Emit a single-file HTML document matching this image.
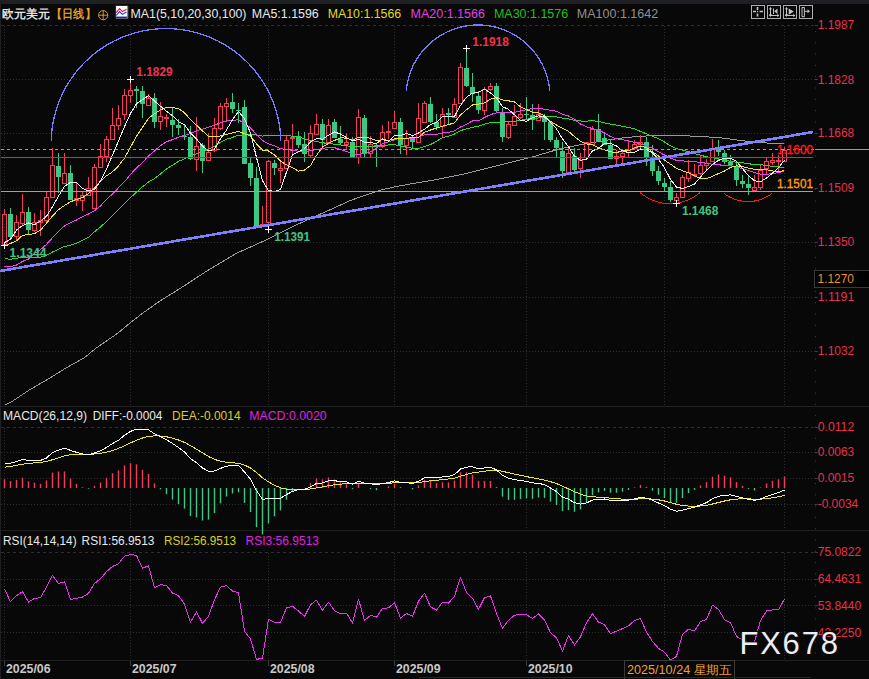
<!DOCTYPE html><html><head><meta charset="utf-8"><style>html,body{margin:0;padding:0;background:#080808;width:869px;height:679px;overflow:hidden}svg{display:block}text{font-family:"Liberation Sans",sans-serif}</style></head><body>
<svg width="869" height="679" viewBox="0 0 869 679">
<rect x="0" y="0" width="869" height="679" fill="#080808"/>
<rect x="0" y="0" width="869" height="4" fill="#1f2023"/>
<rect x="0" y="0" width="1" height="679" fill="#1f2023"/>
<line x1="1" y1="25.5" x2="815" y2="25.5" stroke="#2e2e2e" stroke-width="1" stroke-dasharray="3 3"/>
<line x1="1" y1="79.5" x2="815" y2="79.5" stroke="#2e2e2e" stroke-width="1" stroke-dasharray="1 2"/>
<line x1="1" y1="133.5" x2="815" y2="133.5" stroke="#2e2e2e" stroke-width="1" stroke-dasharray="1 2"/>
<line x1="1" y1="188.5" x2="815" y2="188.5" stroke="#2e2e2e" stroke-width="1" stroke-dasharray="1 2"/>
<line x1="1" y1="242.5" x2="815" y2="242.5" stroke="#2e2e2e" stroke-width="1" stroke-dasharray="1 2"/>
<line x1="1" y1="297.5" x2="815" y2="297.5" stroke="#2e2e2e" stroke-width="1" stroke-dasharray="1 2"/>
<line x1="1" y1="351.5" x2="815" y2="351.5" stroke="#2e2e2e" stroke-width="1" stroke-dasharray="1 2"/>
<line x1="4.5" y1="26" x2="4.5" y2="406" stroke="#2e2e2e" stroke-width="1" stroke-dasharray="1 2"/>
<line x1="4.5" y1="428" x2="4.5" y2="530" stroke="#2e2e2e" stroke-width="1" stroke-dasharray="1 2"/>
<line x1="4.5" y1="553" x2="4.5" y2="660" stroke="#2e2e2e" stroke-width="1" stroke-dasharray="1 2"/>
<line x1="130.5" y1="26" x2="130.5" y2="406" stroke="#2e2e2e" stroke-width="1" stroke-dasharray="1 2"/>
<line x1="130.5" y1="428" x2="130.5" y2="530" stroke="#2e2e2e" stroke-width="1" stroke-dasharray="1 2"/>
<line x1="130.5" y1="553" x2="130.5" y2="660" stroke="#2e2e2e" stroke-width="1" stroke-dasharray="1 2"/>
<line x1="268.5" y1="26" x2="268.5" y2="406" stroke="#2e2e2e" stroke-width="1" stroke-dasharray="1 2"/>
<line x1="268.5" y1="428" x2="268.5" y2="530" stroke="#2e2e2e" stroke-width="1" stroke-dasharray="1 2"/>
<line x1="268.5" y1="553" x2="268.5" y2="660" stroke="#2e2e2e" stroke-width="1" stroke-dasharray="1 2"/>
<line x1="394.5" y1="26" x2="394.5" y2="406" stroke="#2e2e2e" stroke-width="1" stroke-dasharray="1 2"/>
<line x1="394.5" y1="428" x2="394.5" y2="530" stroke="#2e2e2e" stroke-width="1" stroke-dasharray="1 2"/>
<line x1="394.5" y1="553" x2="394.5" y2="660" stroke="#2e2e2e" stroke-width="1" stroke-dasharray="1 2"/>
<line x1="526.5" y1="26" x2="526.5" y2="406" stroke="#2e2e2e" stroke-width="1" stroke-dasharray="1 2"/>
<line x1="526.5" y1="428" x2="526.5" y2="530" stroke="#2e2e2e" stroke-width="1" stroke-dasharray="1 2"/>
<line x1="526.5" y1="553" x2="526.5" y2="660" stroke="#2e2e2e" stroke-width="1" stroke-dasharray="1 2"/>
<line x1="664.5" y1="26" x2="664.5" y2="406" stroke="#2e2e2e" stroke-width="1" stroke-dasharray="1 2"/>
<line x1="664.5" y1="428" x2="664.5" y2="530" stroke="#2e2e2e" stroke-width="1" stroke-dasharray="1 2"/>
<line x1="664.5" y1="553" x2="664.5" y2="660" stroke="#2e2e2e" stroke-width="1" stroke-dasharray="1 2"/>
<line x1="784.5" y1="26" x2="784.5" y2="406" stroke="#2e2e2e" stroke-width="1" stroke-dasharray="1 2"/>
<line x1="784.5" y1="428" x2="784.5" y2="530" stroke="#2e2e2e" stroke-width="1" stroke-dasharray="1 2"/>
<line x1="784.5" y1="553" x2="784.5" y2="660" stroke="#2e2e2e" stroke-width="1" stroke-dasharray="1 2"/>
<line x1="815.5" y1="31" x2="815.5" y2="660" stroke="#3a3a3a" stroke-width="1" stroke-dasharray="1 10.3"/>
<rect x="815" y="25" width="3" height="1" fill="#3a3a3a"/>
<rect x="815" y="79" width="3" height="1" fill="#3a3a3a"/>
<rect x="815" y="133" width="3" height="1" fill="#3a3a3a"/>
<rect x="815" y="188" width="3" height="1" fill="#3a3a3a"/>
<rect x="815" y="242" width="3" height="1" fill="#3a3a3a"/>
<rect x="815" y="297" width="3" height="1" fill="#3a3a3a"/>
<rect x="815" y="351" width="3" height="1" fill="#3a3a3a"/>
<rect x="815" y="427" width="3" height="1" fill="#3a3a3a"/>
<rect x="815" y="452" width="3" height="1" fill="#3a3a3a"/>
<rect x="815" y="478" width="3" height="1" fill="#3a3a3a"/>
<rect x="815" y="504" width="3" height="1" fill="#3a3a3a"/>
<rect x="815" y="552" width="3" height="1" fill="#3a3a3a"/>
<rect x="815" y="579" width="3" height="1" fill="#3a3a3a"/>
<rect x="815" y="605" width="3" height="1" fill="#3a3a3a"/>
<rect x="815" y="632" width="3" height="1" fill="#3a3a3a"/>
<rect x="0" y="406" width="869" height="1" fill="#202020"/>
<rect x="0" y="530" width="869" height="1" fill="#202020"/>
<rect x="0" y="660" width="869" height="1" fill="#202020"/>
<line x1="1" y1="427.5" x2="815" y2="427.5" stroke="#2e2e2e" stroke-width="1" stroke-dasharray="3 3"/>
<line x1="1" y1="452.5" x2="815" y2="452.5" stroke="#2e2e2e" stroke-width="1" stroke-dasharray="1 2"/>
<line x1="1" y1="478.5" x2="815" y2="478.5" stroke="#2e2e2e" stroke-width="1" stroke-dasharray="1 2"/>
<line x1="1" y1="504.5" x2="815" y2="504.5" stroke="#2e2e2e" stroke-width="1" stroke-dasharray="1 2"/>
<line x1="1" y1="552.5" x2="815" y2="552.5" stroke="#2e2e2e" stroke-width="1" stroke-dasharray="3 3"/>
<line x1="1" y1="579.5" x2="815" y2="579.5" stroke="#2e2e2e" stroke-width="1" stroke-dasharray="1 2"/>
<line x1="1" y1="605.5" x2="815" y2="605.5" stroke="#2e2e2e" stroke-width="1" stroke-dasharray="1 2"/>
<line x1="1" y1="632.5" x2="815" y2="632.5" stroke="#2e2e2e" stroke-width="1" stroke-dasharray="1 2"/>
<polyline points="4.6,405.3 11.0,402.2 29.5,389.9 47.9,379.2 66.3,367.8 84.7,357.5 95.8,348.3 117.9,333.1 128.9,323.9 141.8,313.8 160.0,300.9 178.8,289.3 207.5,270.6 236.3,253.4 265.1,240.4 293.8,226.0 322.6,213.1 351.4,200.1 380.2,190.1 400.0,185.8 438.3,179.2 462.5,174.4 486.7,168.3 510.8,162.3 535.0,156.2 559.2,149.0 583.3,144.2 604.5,140.5 626.2,137.4 650.4,135.7 674.6,135.7 698.7,136.2 722.9,138.1 747.1,141.3 771.2,143.4 784.5,143.7" fill="none" stroke="#9a9a9a" stroke-width="1" stroke-linejoin="round" shape-rendering="crispEdges"/>
<line x1="4.5" y1="209" x2="4.5" y2="214" stroke="#f23c5a" stroke-width="1"/>
<line x1="4.5" y1="244" x2="4.5" y2="245" stroke="#f23c5a" stroke-width="1"/>
<rect x="2.5" y="214.5" width="4" height="30" fill="none" stroke="#f23c5a" stroke-width="1"/>
<line x1="10.5" y1="208" x2="10.5" y2="238" stroke="#3cc884" stroke-width="1"/>
<rect x="8.0" y="214" width="5" height="23" fill="#3cc884"/>
<line x1="16.5" y1="215" x2="16.5" y2="222" stroke="#f23c5a" stroke-width="1"/>
<line x1="16.5" y1="236" x2="16.5" y2="241" stroke="#f23c5a" stroke-width="1"/>
<rect x="14.5" y="222.5" width="4" height="14" fill="none" stroke="#f23c5a" stroke-width="1"/>
<line x1="22.5" y1="194" x2="22.5" y2="212" stroke="#f23c5a" stroke-width="1"/>
<line x1="22.5" y1="223" x2="22.5" y2="226" stroke="#f23c5a" stroke-width="1"/>
<rect x="20.5" y="212.5" width="4" height="11" fill="none" stroke="#f23c5a" stroke-width="1"/>
<line x1="28.5" y1="207" x2="28.5" y2="234" stroke="#3cc884" stroke-width="1"/>
<rect x="26.0" y="212" width="5" height="18" fill="#3cc884"/>
<line x1="34.5" y1="213" x2="34.5" y2="222" stroke="#f23c5a" stroke-width="1"/>
<line x1="34.5" y1="230" x2="34.5" y2="232" stroke="#f23c5a" stroke-width="1"/>
<rect x="32.5" y="222.5" width="4" height="8" fill="none" stroke="#f23c5a" stroke-width="1"/>
<line x1="40.5" y1="210" x2="40.5" y2="220" stroke="#f23c5a" stroke-width="1"/>
<line x1="40.5" y1="222" x2="40.5" y2="236" stroke="#f23c5a" stroke-width="1"/>
<rect x="38.5" y="220.5" width="4" height="2" fill="none" stroke="#f23c5a" stroke-width="1"/>
<line x1="46.5" y1="192" x2="46.5" y2="197" stroke="#f23c5a" stroke-width="1"/>
<line x1="46.5" y1="220" x2="46.5" y2="223" stroke="#f23c5a" stroke-width="1"/>
<rect x="44.5" y="197.5" width="4" height="23" fill="none" stroke="#f23c5a" stroke-width="1"/>
<line x1="52.5" y1="148" x2="52.5" y2="165" stroke="#f23c5a" stroke-width="1"/>
<line x1="52.5" y1="197" x2="52.5" y2="198" stroke="#f23c5a" stroke-width="1"/>
<rect x="50.5" y="165.5" width="4" height="32" fill="none" stroke="#f23c5a" stroke-width="1"/>
<line x1="58.5" y1="153" x2="58.5" y2="193" stroke="#3cc884" stroke-width="1"/>
<rect x="56.0" y="166" width="5" height="11" fill="#3cc884"/>
<line x1="64.5" y1="153" x2="64.5" y2="173" stroke="#f23c5a" stroke-width="1"/>
<line x1="64.5" y1="183" x2="64.5" y2="183" stroke="#f23c5a" stroke-width="1"/>
<rect x="62.5" y="173.5" width="4" height="10" fill="none" stroke="#f23c5a" stroke-width="1"/>
<line x1="70.5" y1="165" x2="70.5" y2="200" stroke="#3cc884" stroke-width="1"/>
<rect x="68.0" y="173" width="5" height="27" fill="#3cc884"/>
<line x1="76.5" y1="182" x2="76.5" y2="198" stroke="#f23c5a" stroke-width="1"/>
<line x1="76.5" y1="200" x2="76.5" y2="206" stroke="#f23c5a" stroke-width="1"/>
<rect x="74.5" y="198.5" width="4" height="2" fill="none" stroke="#f23c5a" stroke-width="1"/>
<line x1="82.5" y1="192" x2="82.5" y2="195" stroke="#f23c5a" stroke-width="1"/>
<line x1="82.5" y1="200" x2="82.5" y2="211" stroke="#f23c5a" stroke-width="1"/>
<rect x="80.5" y="195.5" width="4" height="5" fill="none" stroke="#f23c5a" stroke-width="1"/>
<line x1="88.5" y1="177" x2="88.5" y2="188" stroke="#f23c5a" stroke-width="1"/>
<line x1="88.5" y1="195" x2="88.5" y2="196" stroke="#f23c5a" stroke-width="1"/>
<rect x="86.5" y="188.5" width="4" height="7" fill="none" stroke="#f23c5a" stroke-width="1"/>
<line x1="94.5" y1="164" x2="94.5" y2="167" stroke="#f23c5a" stroke-width="1"/>
<line x1="94.5" y1="208" x2="94.5" y2="209" stroke="#f23c5a" stroke-width="1"/>
<rect x="92.5" y="167.5" width="4" height="41" fill="none" stroke="#f23c5a" stroke-width="1"/>
<line x1="100.5" y1="144" x2="100.5" y2="156" stroke="#f23c5a" stroke-width="1"/>
<line x1="100.5" y1="167" x2="100.5" y2="167" stroke="#f23c5a" stroke-width="1"/>
<rect x="98.5" y="156.5" width="4" height="11" fill="none" stroke="#f23c5a" stroke-width="1"/>
<line x1="106.5" y1="136" x2="106.5" y2="139" stroke="#f23c5a" stroke-width="1"/>
<line x1="106.5" y1="156" x2="106.5" y2="162" stroke="#f23c5a" stroke-width="1"/>
<rect x="104.5" y="139.5" width="4" height="17" fill="none" stroke="#f23c5a" stroke-width="1"/>
<line x1="112.5" y1="108" x2="112.5" y2="125" stroke="#f23c5a" stroke-width="1"/>
<line x1="112.5" y1="139" x2="112.5" y2="140" stroke="#f23c5a" stroke-width="1"/>
<rect x="110.5" y="125.5" width="4" height="14" fill="none" stroke="#f23c5a" stroke-width="1"/>
<line x1="118.5" y1="105" x2="118.5" y2="118" stroke="#f23c5a" stroke-width="1"/>
<line x1="118.5" y1="125" x2="118.5" y2="130" stroke="#f23c5a" stroke-width="1"/>
<rect x="116.5" y="118.5" width="4" height="7" fill="none" stroke="#f23c5a" stroke-width="1"/>
<line x1="124.5" y1="89" x2="124.5" y2="95" stroke="#f23c5a" stroke-width="1"/>
<line x1="124.5" y1="114" x2="124.5" y2="120" stroke="#f23c5a" stroke-width="1"/>
<rect x="122.5" y="95.5" width="4" height="19" fill="none" stroke="#f23c5a" stroke-width="1"/>
<line x1="130.5" y1="79" x2="130.5" y2="90" stroke="#f23c5a" stroke-width="1"/>
<line x1="130.5" y1="95" x2="130.5" y2="103" stroke="#f23c5a" stroke-width="1"/>
<rect x="128.5" y="90.5" width="4" height="5" fill="none" stroke="#f23c5a" stroke-width="1"/>
<line x1="136.5" y1="86" x2="136.5" y2="108" stroke="#3cc884" stroke-width="1"/>
<rect x="134.0" y="89" width="5" height="2" fill="#3cc884"/>
<line x1="142.5" y1="86" x2="142.5" y2="118" stroke="#3cc884" stroke-width="1"/>
<rect x="140.0" y="91" width="5" height="13" fill="#3cc884"/>
<line x1="148.5" y1="94" x2="148.5" y2="98" stroke="#f23c5a" stroke-width="1"/>
<line x1="148.5" y1="105" x2="148.5" y2="106" stroke="#f23c5a" stroke-width="1"/>
<rect x="146.5" y="98.5" width="4" height="7" fill="none" stroke="#f23c5a" stroke-width="1"/>
<line x1="154.5" y1="93" x2="154.5" y2="128" stroke="#3cc884" stroke-width="1"/>
<rect x="152.0" y="98" width="5" height="24" fill="#3cc884"/>
<line x1="160.5" y1="102" x2="160.5" y2="116" stroke="#f23c5a" stroke-width="1"/>
<line x1="160.5" y1="121" x2="160.5" y2="130" stroke="#f23c5a" stroke-width="1"/>
<rect x="158.5" y="116.5" width="4" height="5" fill="none" stroke="#f23c5a" stroke-width="1"/>
<line x1="166.5" y1="114" x2="166.5" y2="117" stroke="#f23c5a" stroke-width="1"/>
<line x1="166.5" y1="118" x2="166.5" y2="127" stroke="#f23c5a" stroke-width="1"/>
<rect x="164.5" y="117.5" width="4" height="1" fill="none" stroke="#f23c5a" stroke-width="1"/>
<line x1="172.5" y1="108" x2="172.5" y2="137" stroke="#3cc884" stroke-width="1"/>
<rect x="170.0" y="120" width="5" height="5" fill="#3cc884"/>
<line x1="178.5" y1="119" x2="178.5" y2="135" stroke="#3cc884" stroke-width="1"/>
<rect x="176.0" y="125" width="5" height="3" fill="#3cc884"/>
<line x1="184.5" y1="125" x2="184.5" y2="140" stroke="#3cc884" stroke-width="1"/>
<rect x="182.0" y="136" width="5" height="1" fill="#3cc884"/>
<line x1="190.5" y1="126" x2="190.5" y2="160" stroke="#3cc884" stroke-width="1"/>
<rect x="188.0" y="137" width="5" height="22" fill="#3cc884"/>
<line x1="196.5" y1="117" x2="196.5" y2="146" stroke="#f23c5a" stroke-width="1"/>
<line x1="196.5" y1="159" x2="196.5" y2="171" stroke="#f23c5a" stroke-width="1"/>
<rect x="194.5" y="146.5" width="4" height="13" fill="none" stroke="#f23c5a" stroke-width="1"/>
<line x1="202.5" y1="143" x2="202.5" y2="173" stroke="#3cc884" stroke-width="1"/>
<rect x="200.0" y="145" width="5" height="16" fill="#3cc884"/>
<line x1="208.5" y1="133" x2="208.5" y2="152" stroke="#f23c5a" stroke-width="1"/>
<line x1="208.5" y1="160" x2="208.5" y2="161" stroke="#f23c5a" stroke-width="1"/>
<rect x="206.5" y="152.5" width="4" height="8" fill="none" stroke="#f23c5a" stroke-width="1"/>
<line x1="214.5" y1="118" x2="214.5" y2="128" stroke="#f23c5a" stroke-width="1"/>
<line x1="214.5" y1="150" x2="214.5" y2="152" stroke="#f23c5a" stroke-width="1"/>
<rect x="212.5" y="128.5" width="4" height="22" fill="none" stroke="#f23c5a" stroke-width="1"/>
<line x1="220.5" y1="103" x2="220.5" y2="106" stroke="#f23c5a" stroke-width="1"/>
<line x1="220.5" y1="128" x2="220.5" y2="130" stroke="#f23c5a" stroke-width="1"/>
<rect x="218.5" y="106.5" width="4" height="22" fill="none" stroke="#f23c5a" stroke-width="1"/>
<line x1="226.5" y1="98" x2="226.5" y2="103" stroke="#f23c5a" stroke-width="1"/>
<line x1="226.5" y1="106" x2="226.5" y2="120" stroke="#f23c5a" stroke-width="1"/>
<rect x="224.5" y="103.5" width="4" height="3" fill="none" stroke="#f23c5a" stroke-width="1"/>
<line x1="232.5" y1="93" x2="232.5" y2="113" stroke="#3cc884" stroke-width="1"/>
<rect x="230.0" y="102" width="5" height="7" fill="#3cc884"/>
<line x1="238.5" y1="103" x2="238.5" y2="123" stroke="#3cc884" stroke-width="1"/>
<rect x="236.0" y="110" width="5" height="1" fill="#3cc884"/>
<line x1="244.5" y1="100" x2="244.5" y2="164" stroke="#3cc884" stroke-width="1"/>
<rect x="242.0" y="107" width="5" height="57" fill="#3cc884"/>
<line x1="250.5" y1="158" x2="250.5" y2="186" stroke="#3cc884" stroke-width="1"/>
<rect x="248.0" y="163" width="5" height="15" fill="#3cc884"/>
<line x1="256.5" y1="167" x2="256.5" y2="226" stroke="#3cc884" stroke-width="1"/>
<rect x="254.0" y="178" width="5" height="48" fill="#3cc884"/>
<line x1="262.5" y1="206" x2="262.5" y2="224" stroke="#f23c5a" stroke-width="1"/>
<line x1="262.5" y1="225" x2="262.5" y2="226" stroke="#f23c5a" stroke-width="1"/>
<rect x="260.5" y="224.5" width="4" height="1" fill="none" stroke="#f23c5a" stroke-width="1"/>
<line x1="268.5" y1="160" x2="268.5" y2="161" stroke="#f23c5a" stroke-width="1"/>
<line x1="268.5" y1="222" x2="268.5" y2="229" stroke="#f23c5a" stroke-width="1"/>
<rect x="266.5" y="161.5" width="4" height="61" fill="none" stroke="#f23c5a" stroke-width="1"/>
<line x1="274.5" y1="160" x2="274.5" y2="175" stroke="#3cc884" stroke-width="1"/>
<rect x="272.0" y="163" width="5" height="5" fill="#3cc884"/>
<line x1="280.5" y1="162" x2="280.5" y2="168" stroke="#f23c5a" stroke-width="1"/>
<line x1="280.5" y1="170" x2="280.5" y2="183" stroke="#f23c5a" stroke-width="1"/>
<rect x="278.5" y="168.5" width="4" height="2" fill="none" stroke="#f23c5a" stroke-width="1"/>
<line x1="286.5" y1="136" x2="286.5" y2="140" stroke="#f23c5a" stroke-width="1"/>
<line x1="286.5" y1="168" x2="286.5" y2="168" stroke="#f23c5a" stroke-width="1"/>
<rect x="284.5" y="140.5" width="4" height="28" fill="none" stroke="#f23c5a" stroke-width="1"/>
<line x1="292.5" y1="124" x2="292.5" y2="137" stroke="#f23c5a" stroke-width="1"/>
<line x1="292.5" y1="138" x2="292.5" y2="154" stroke="#f23c5a" stroke-width="1"/>
<rect x="290.5" y="137.5" width="4" height="1" fill="none" stroke="#f23c5a" stroke-width="1"/>
<line x1="298.5" y1="131" x2="298.5" y2="148" stroke="#3cc884" stroke-width="1"/>
<rect x="296.0" y="136" width="5" height="9" fill="#3cc884"/>
<line x1="304.5" y1="132" x2="304.5" y2="162" stroke="#3cc884" stroke-width="1"/>
<rect x="302.0" y="144" width="5" height="10" fill="#3cc884"/>
<line x1="310.5" y1="125" x2="310.5" y2="133" stroke="#f23c5a" stroke-width="1"/>
<line x1="310.5" y1="155" x2="310.5" y2="157" stroke="#f23c5a" stroke-width="1"/>
<rect x="308.5" y="133.5" width="4" height="22" fill="none" stroke="#f23c5a" stroke-width="1"/>
<line x1="316.5" y1="114" x2="316.5" y2="124" stroke="#f23c5a" stroke-width="1"/>
<line x1="316.5" y1="134" x2="316.5" y2="134" stroke="#f23c5a" stroke-width="1"/>
<rect x="314.5" y="124.5" width="4" height="10" fill="none" stroke="#f23c5a" stroke-width="1"/>
<line x1="322.5" y1="119" x2="322.5" y2="146" stroke="#3cc884" stroke-width="1"/>
<rect x="320.0" y="124" width="5" height="16" fill="#3cc884"/>
<line x1="328.5" y1="119" x2="328.5" y2="125" stroke="#f23c5a" stroke-width="1"/>
<line x1="328.5" y1="142" x2="328.5" y2="143" stroke="#f23c5a" stroke-width="1"/>
<rect x="326.5" y="125.5" width="4" height="17" fill="none" stroke="#f23c5a" stroke-width="1"/>
<line x1="334.5" y1="119" x2="334.5" y2="138" stroke="#3cc884" stroke-width="1"/>
<rect x="332.0" y="122" width="5" height="16" fill="#3cc884"/>
<line x1="340.5" y1="126" x2="340.5" y2="144" stroke="#3cc884" stroke-width="1"/>
<rect x="338.0" y="139" width="5" height="4" fill="#3cc884"/>
<line x1="346.5" y1="133" x2="346.5" y2="142" stroke="#f23c5a" stroke-width="1"/>
<line x1="346.5" y1="144" x2="346.5" y2="150" stroke="#f23c5a" stroke-width="1"/>
<rect x="344.5" y="142.5" width="4" height="2" fill="none" stroke="#f23c5a" stroke-width="1"/>
<line x1="352.5" y1="137" x2="352.5" y2="157" stroke="#3cc884" stroke-width="1"/>
<rect x="350.0" y="142" width="5" height="15" fill="#3cc884"/>
<line x1="358.5" y1="109" x2="358.5" y2="117" stroke="#f23c5a" stroke-width="1"/>
<line x1="358.5" y1="157" x2="358.5" y2="164" stroke="#f23c5a" stroke-width="1"/>
<rect x="356.5" y="117.5" width="4" height="40" fill="none" stroke="#f23c5a" stroke-width="1"/>
<line x1="364.5" y1="115" x2="364.5" y2="157" stroke="#3cc884" stroke-width="1"/>
<rect x="362.0" y="118" width="5" height="35" fill="#3cc884"/>
<line x1="370.5" y1="136" x2="370.5" y2="144" stroke="#f23c5a" stroke-width="1"/>
<line x1="370.5" y1="153" x2="370.5" y2="157" stroke="#f23c5a" stroke-width="1"/>
<rect x="368.5" y="144.5" width="4" height="9" fill="none" stroke="#f23c5a" stroke-width="1"/>
<line x1="376.5" y1="143" x2="376.5" y2="167" stroke="#3cc884" stroke-width="1"/>
<rect x="374.0" y="145" width="5" height="2" fill="#3cc884"/>
<line x1="382.5" y1="125" x2="382.5" y2="132" stroke="#f23c5a" stroke-width="1"/>
<line x1="382.5" y1="146" x2="382.5" y2="148" stroke="#f23c5a" stroke-width="1"/>
<rect x="380.5" y="132.5" width="4" height="14" fill="none" stroke="#f23c5a" stroke-width="1"/>
<line x1="388.5" y1="121" x2="388.5" y2="131" stroke="#f23c5a" stroke-width="1"/>
<line x1="388.5" y1="132" x2="388.5" y2="139" stroke="#f23c5a" stroke-width="1"/>
<rect x="386.5" y="131.5" width="4" height="1" fill="none" stroke="#f23c5a" stroke-width="1"/>
<line x1="394.5" y1="111" x2="394.5" y2="122" stroke="#f23c5a" stroke-width="1"/>
<line x1="394.5" y1="128" x2="394.5" y2="129" stroke="#f23c5a" stroke-width="1"/>
<rect x="392.5" y="122.5" width="4" height="6" fill="none" stroke="#f23c5a" stroke-width="1"/>
<line x1="400.5" y1="118" x2="400.5" y2="154" stroke="#3cc884" stroke-width="1"/>
<rect x="398.0" y="122" width="5" height="23" fill="#3cc884"/>
<line x1="406.5" y1="130" x2="406.5" y2="138" stroke="#f23c5a" stroke-width="1"/>
<line x1="406.5" y1="145" x2="406.5" y2="155" stroke="#f23c5a" stroke-width="1"/>
<rect x="404.5" y="138.5" width="4" height="7" fill="none" stroke="#f23c5a" stroke-width="1"/>
<line x1="412.5" y1="135" x2="412.5" y2="148" stroke="#3cc884" stroke-width="1"/>
<rect x="410.0" y="138" width="5" height="4" fill="#3cc884"/>
<line x1="418.5" y1="103" x2="418.5" y2="118" stroke="#f23c5a" stroke-width="1"/>
<line x1="418.5" y1="142" x2="418.5" y2="143" stroke="#f23c5a" stroke-width="1"/>
<rect x="416.5" y="118.5" width="4" height="24" fill="none" stroke="#f23c5a" stroke-width="1"/>
<line x1="424.5" y1="101" x2="424.5" y2="103" stroke="#f23c5a" stroke-width="1"/>
<line x1="424.5" y1="122" x2="424.5" y2="122" stroke="#f23c5a" stroke-width="1"/>
<rect x="422.5" y="103.5" width="4" height="19" fill="none" stroke="#f23c5a" stroke-width="1"/>
<line x1="430.5" y1="97" x2="430.5" y2="123" stroke="#3cc884" stroke-width="1"/>
<rect x="428.0" y="104" width="5" height="18" fill="#3cc884"/>
<line x1="436.5" y1="114" x2="436.5" y2="130" stroke="#3cc884" stroke-width="1"/>
<rect x="434.0" y="122" width="5" height="5" fill="#3cc884"/>
<line x1="442.5" y1="108" x2="442.5" y2="114" stroke="#f23c5a" stroke-width="1"/>
<line x1="442.5" y1="126" x2="442.5" y2="137" stroke="#f23c5a" stroke-width="1"/>
<rect x="440.5" y="114.5" width="4" height="12" fill="none" stroke="#f23c5a" stroke-width="1"/>
<line x1="448.5" y1="108" x2="448.5" y2="124" stroke="#3cc884" stroke-width="1"/>
<rect x="446.0" y="113" width="5" height="2" fill="#3cc884"/>
<line x1="454.5" y1="98" x2="454.5" y2="104" stroke="#f23c5a" stroke-width="1"/>
<line x1="454.5" y1="117" x2="454.5" y2="118" stroke="#f23c5a" stroke-width="1"/>
<rect x="452.5" y="104.5" width="4" height="13" fill="none" stroke="#f23c5a" stroke-width="1"/>
<line x1="460.5" y1="63" x2="460.5" y2="67" stroke="#f23c5a" stroke-width="1"/>
<line x1="460.5" y1="103" x2="460.5" y2="104" stroke="#f23c5a" stroke-width="1"/>
<rect x="458.5" y="67.5" width="4" height="36" fill="none" stroke="#f23c5a" stroke-width="1"/>
<line x1="466.5" y1="49" x2="466.5" y2="87" stroke="#3cc884" stroke-width="1"/>
<rect x="464.0" y="68" width="5" height="18" fill="#3cc884"/>
<line x1="472.5" y1="73" x2="472.5" y2="102" stroke="#3cc884" stroke-width="1"/>
<rect x="470.0" y="87" width="5" height="7" fill="#3cc884"/>
<line x1="478.5" y1="91" x2="478.5" y2="114" stroke="#3cc884" stroke-width="1"/>
<rect x="476.0" y="96" width="5" height="14" fill="#3cc884"/>
<line x1="484.5" y1="87" x2="484.5" y2="89" stroke="#f23c5a" stroke-width="1"/>
<line x1="484.5" y1="110" x2="484.5" y2="115" stroke="#f23c5a" stroke-width="1"/>
<rect x="482.5" y="89.5" width="4" height="21" fill="none" stroke="#f23c5a" stroke-width="1"/>
<line x1="490.5" y1="83" x2="490.5" y2="86" stroke="#f23c5a" stroke-width="1"/>
<line x1="490.5" y1="89" x2="490.5" y2="91" stroke="#f23c5a" stroke-width="1"/>
<rect x="488.5" y="86.5" width="4" height="3" fill="none" stroke="#f23c5a" stroke-width="1"/>
<line x1="496.5" y1="83" x2="496.5" y2="113" stroke="#3cc884" stroke-width="1"/>
<rect x="494.0" y="86" width="5" height="25" fill="#3cc884"/>
<line x1="502.5" y1="108" x2="502.5" y2="142" stroke="#3cc884" stroke-width="1"/>
<rect x="500.0" y="112" width="5" height="25" fill="#3cc884"/>
<line x1="508.5" y1="122" x2="508.5" y2="124" stroke="#f23c5a" stroke-width="1"/>
<line x1="508.5" y1="137" x2="508.5" y2="139" stroke="#f23c5a" stroke-width="1"/>
<rect x="506.5" y="124.5" width="4" height="13" fill="none" stroke="#f23c5a" stroke-width="1"/>
<line x1="514.5" y1="105" x2="514.5" y2="116" stroke="#f23c5a" stroke-width="1"/>
<line x1="514.5" y1="125" x2="514.5" y2="125" stroke="#f23c5a" stroke-width="1"/>
<rect x="512.5" y="116.5" width="4" height="9" fill="none" stroke="#f23c5a" stroke-width="1"/>
<line x1="520.5" y1="103" x2="520.5" y2="114" stroke="#f23c5a" stroke-width="1"/>
<line x1="520.5" y1="117" x2="520.5" y2="119" stroke="#f23c5a" stroke-width="1"/>
<rect x="518.5" y="114.5" width="4" height="3" fill="none" stroke="#f23c5a" stroke-width="1"/>
<line x1="526.5" y1="97" x2="526.5" y2="119" stroke="#3cc884" stroke-width="1"/>
<rect x="524.0" y="114" width="5" height="1" fill="#3cc884"/>
<line x1="532.5" y1="104" x2="532.5" y2="130" stroke="#3cc884" stroke-width="1"/>
<rect x="530.0" y="115" width="5" height="5" fill="#3cc884"/>
<line x1="538.5" y1="104" x2="538.5" y2="114" stroke="#f23c5a" stroke-width="1"/>
<line x1="538.5" y1="120" x2="538.5" y2="120" stroke="#f23c5a" stroke-width="1"/>
<rect x="536.5" y="114.5" width="4" height="6" fill="none" stroke="#f23c5a" stroke-width="1"/>
<line x1="544.5" y1="114" x2="544.5" y2="140" stroke="#3cc884" stroke-width="1"/>
<rect x="542.0" y="118" width="5" height="4" fill="#3cc884"/>
<line x1="550.5" y1="122" x2="550.5" y2="142" stroke="#3cc884" stroke-width="1"/>
<rect x="548.0" y="122" width="5" height="18" fill="#3cc884"/>
<line x1="556.5" y1="137" x2="556.5" y2="157" stroke="#3cc884" stroke-width="1"/>
<rect x="554.0" y="140" width="5" height="8" fill="#3cc884"/>
<line x1="562.5" y1="142" x2="562.5" y2="178" stroke="#3cc884" stroke-width="1"/>
<rect x="560.0" y="151" width="5" height="20" fill="#3cc884"/>
<line x1="568.5" y1="148" x2="568.5" y2="153" stroke="#f23c5a" stroke-width="1"/>
<line x1="568.5" y1="172" x2="568.5" y2="172" stroke="#f23c5a" stroke-width="1"/>
<rect x="566.5" y="153.5" width="4" height="19" fill="none" stroke="#f23c5a" stroke-width="1"/>
<line x1="574.5" y1="148" x2="574.5" y2="171" stroke="#3cc884" stroke-width="1"/>
<rect x="572.0" y="156" width="5" height="14" fill="#3cc884"/>
<line x1="580.5" y1="153" x2="580.5" y2="160" stroke="#f23c5a" stroke-width="1"/>
<line x1="580.5" y1="168" x2="580.5" y2="178" stroke="#f23c5a" stroke-width="1"/>
<rect x="578.5" y="160.5" width="4" height="8" fill="none" stroke="#f23c5a" stroke-width="1"/>
<line x1="586.5" y1="142" x2="586.5" y2="142" stroke="#f23c5a" stroke-width="1"/>
<line x1="586.5" y1="157" x2="586.5" y2="157" stroke="#f23c5a" stroke-width="1"/>
<rect x="584.5" y="142.5" width="4" height="15" fill="none" stroke="#f23c5a" stroke-width="1"/>
<line x1="592.5" y1="126" x2="592.5" y2="129" stroke="#f23c5a" stroke-width="1"/>
<line x1="592.5" y1="144" x2="592.5" y2="144" stroke="#f23c5a" stroke-width="1"/>
<rect x="590.5" y="129.5" width="4" height="15" fill="none" stroke="#f23c5a" stroke-width="1"/>
<line x1="598.5" y1="114" x2="598.5" y2="141" stroke="#3cc884" stroke-width="1"/>
<rect x="596.0" y="129" width="5" height="12" fill="#3cc884"/>
<line x1="604.5" y1="133" x2="604.5" y2="145" stroke="#3cc884" stroke-width="1"/>
<rect x="602.0" y="138" width="5" height="7" fill="#3cc884"/>
<line x1="610.5" y1="139" x2="610.5" y2="159" stroke="#3cc884" stroke-width="1"/>
<rect x="608.0" y="145" width="5" height="14" fill="#3cc884"/>
<line x1="616.5" y1="150" x2="616.5" y2="156" stroke="#f23c5a" stroke-width="1"/>
<line x1="616.5" y1="158" x2="616.5" y2="164" stroke="#f23c5a" stroke-width="1"/>
<rect x="614.5" y="156.5" width="4" height="2" fill="none" stroke="#f23c5a" stroke-width="1"/>
<line x1="622.5" y1="149" x2="622.5" y2="153" stroke="#f23c5a" stroke-width="1"/>
<line x1="622.5" y1="156" x2="622.5" y2="164" stroke="#f23c5a" stroke-width="1"/>
<rect x="620.5" y="153.5" width="4" height="3" fill="none" stroke="#f23c5a" stroke-width="1"/>
<line x1="628.5" y1="140" x2="628.5" y2="150" stroke="#f23c5a" stroke-width="1"/>
<line x1="628.5" y1="152" x2="628.5" y2="157" stroke="#f23c5a" stroke-width="1"/>
<rect x="626.5" y="150.5" width="4" height="2" fill="none" stroke="#f23c5a" stroke-width="1"/>
<line x1="634.5" y1="140" x2="634.5" y2="144" stroke="#f23c5a" stroke-width="1"/>
<line x1="634.5" y1="148" x2="634.5" y2="150" stroke="#f23c5a" stroke-width="1"/>
<rect x="632.5" y="144.5" width="4" height="4" fill="none" stroke="#f23c5a" stroke-width="1"/>
<line x1="640.5" y1="135" x2="640.5" y2="142" stroke="#f23c5a" stroke-width="1"/>
<line x1="640.5" y1="144" x2="640.5" y2="148" stroke="#f23c5a" stroke-width="1"/>
<rect x="638.5" y="142.5" width="4" height="2" fill="none" stroke="#f23c5a" stroke-width="1"/>
<line x1="646.5" y1="137" x2="646.5" y2="166" stroke="#3cc884" stroke-width="1"/>
<rect x="644.0" y="142" width="5" height="16" fill="#3cc884"/>
<line x1="652.5" y1="145" x2="652.5" y2="176" stroke="#3cc884" stroke-width="1"/>
<rect x="650.0" y="160" width="5" height="11" fill="#3cc884"/>
<line x1="658.5" y1="166" x2="658.5" y2="185" stroke="#3cc884" stroke-width="1"/>
<rect x="656.0" y="171" width="5" height="10" fill="#3cc884"/>
<line x1="664.5" y1="178" x2="664.5" y2="191" stroke="#3cc884" stroke-width="1"/>
<rect x="662.0" y="183" width="5" height="4" fill="#3cc884"/>
<line x1="670.5" y1="181" x2="670.5" y2="202" stroke="#3cc884" stroke-width="1"/>
<rect x="668.0" y="187" width="5" height="13" fill="#3cc884"/>
<line x1="676.5" y1="193" x2="676.5" y2="197" stroke="#f23c5a" stroke-width="1"/>
<line x1="676.5" y1="200" x2="676.5" y2="204" stroke="#f23c5a" stroke-width="1"/>
<rect x="674.5" y="197.5" width="4" height="3" fill="none" stroke="#f23c5a" stroke-width="1"/>
<line x1="682.5" y1="175" x2="682.5" y2="177" stroke="#f23c5a" stroke-width="1"/>
<line x1="682.5" y1="197" x2="682.5" y2="197" stroke="#f23c5a" stroke-width="1"/>
<rect x="680.5" y="177.5" width="4" height="20" fill="none" stroke="#f23c5a" stroke-width="1"/>
<line x1="688.5" y1="160" x2="688.5" y2="172" stroke="#f23c5a" stroke-width="1"/>
<line x1="688.5" y1="178" x2="688.5" y2="182" stroke="#f23c5a" stroke-width="1"/>
<rect x="686.5" y="172.5" width="4" height="6" fill="none" stroke="#f23c5a" stroke-width="1"/>
<line x1="694.5" y1="164" x2="694.5" y2="174" stroke="#f23c5a" stroke-width="1"/>
<line x1="694.5" y1="175" x2="694.5" y2="177" stroke="#f23c5a" stroke-width="1"/>
<rect x="692.5" y="174.5" width="4" height="1" fill="none" stroke="#f23c5a" stroke-width="1"/>
<line x1="700.5" y1="156" x2="700.5" y2="165" stroke="#f23c5a" stroke-width="1"/>
<line x1="700.5" y1="173" x2="700.5" y2="175" stroke="#f23c5a" stroke-width="1"/>
<rect x="698.5" y="165.5" width="4" height="8" fill="none" stroke="#f23c5a" stroke-width="1"/>
<line x1="706.5" y1="159" x2="706.5" y2="163" stroke="#f23c5a" stroke-width="1"/>
<line x1="706.5" y1="165" x2="706.5" y2="169" stroke="#f23c5a" stroke-width="1"/>
<rect x="704.5" y="163.5" width="4" height="2" fill="none" stroke="#f23c5a" stroke-width="1"/>
<line x1="712.5" y1="139" x2="712.5" y2="148" stroke="#f23c5a" stroke-width="1"/>
<line x1="712.5" y1="161" x2="712.5" y2="162" stroke="#f23c5a" stroke-width="1"/>
<rect x="710.5" y="148.5" width="4" height="13" fill="none" stroke="#f23c5a" stroke-width="1"/>
<line x1="718.5" y1="140" x2="718.5" y2="156" stroke="#3cc884" stroke-width="1"/>
<rect x="716.0" y="149" width="5" height="3" fill="#3cc884"/>
<line x1="724.5" y1="150" x2="724.5" y2="164" stroke="#3cc884" stroke-width="1"/>
<rect x="722.0" y="153" width="5" height="9" fill="#3cc884"/>
<line x1="730.5" y1="155" x2="730.5" y2="166" stroke="#3cc884" stroke-width="1"/>
<rect x="728.0" y="162" width="5" height="3" fill="#3cc884"/>
<line x1="736.5" y1="163" x2="736.5" y2="186" stroke="#3cc884" stroke-width="1"/>
<rect x="734.0" y="166" width="5" height="14" fill="#3cc884"/>
<line x1="742.5" y1="175" x2="742.5" y2="188" stroke="#3cc884" stroke-width="1"/>
<rect x="740.0" y="181" width="5" height="3" fill="#3cc884"/>
<line x1="748.5" y1="176" x2="748.5" y2="195" stroke="#3cc884" stroke-width="1"/>
<rect x="746.0" y="184" width="5" height="4" fill="#3cc884"/>
<line x1="754.5" y1="175" x2="754.5" y2="187" stroke="#f23c5a" stroke-width="1"/>
<line x1="754.5" y1="190" x2="754.5" y2="191" stroke="#f23c5a" stroke-width="1"/>
<rect x="752.5" y="187.5" width="4" height="3" fill="none" stroke="#f23c5a" stroke-width="1"/>
<line x1="760.5" y1="164" x2="760.5" y2="170" stroke="#f23c5a" stroke-width="1"/>
<line x1="760.5" y1="187" x2="760.5" y2="190" stroke="#f23c5a" stroke-width="1"/>
<rect x="758.5" y="170.5" width="4" height="17" fill="none" stroke="#f23c5a" stroke-width="1"/>
<line x1="766.5" y1="158" x2="766.5" y2="161" stroke="#f23c5a" stroke-width="1"/>
<line x1="766.5" y1="168" x2="766.5" y2="175" stroke="#f23c5a" stroke-width="1"/>
<rect x="764.5" y="161.5" width="4" height="7" fill="none" stroke="#f23c5a" stroke-width="1"/>
<line x1="772.5" y1="153" x2="772.5" y2="160" stroke="#f23c5a" stroke-width="1"/>
<line x1="772.5" y1="162" x2="772.5" y2="165" stroke="#f23c5a" stroke-width="1"/>
<rect x="770.5" y="160.5" width="4" height="2" fill="none" stroke="#f23c5a" stroke-width="1"/>
<line x1="778.5" y1="155" x2="778.5" y2="160" stroke="#f23c5a" stroke-width="1"/>
<line x1="778.5" y1="161" x2="778.5" y2="173" stroke="#f23c5a" stroke-width="1"/>
<rect x="776.5" y="160.5" width="4" height="1" fill="none" stroke="#f23c5a" stroke-width="1"/>
<line x1="784.5" y1="147" x2="784.5" y2="150" stroke="#f23c5a" stroke-width="1"/>
<line x1="784.5" y1="161" x2="784.5" y2="162" stroke="#f23c5a" stroke-width="1"/>
<rect x="782.5" y="150.5" width="4" height="11" fill="none" stroke="#f23c5a" stroke-width="1"/>
<polyline points="4.5,258.7 10.5,259.3 16.5,258.2 22.5,257.6 28.5,257.4 34.5,257.5 40.5,257.1 46.5,255.3 52.5,252.0 58.5,249.2 64.5,246.5 70.5,245.2 76.5,243.1 82.5,240.2 88.5,237.2 94.5,231.7 100.5,227.0 106.5,221.5 112.5,215.7 118.5,209.4 124.5,203.3 130.5,197.5 136.5,192.2 142.5,186.8 148.5,182.1 154.5,178.5 160.5,173.9 166.5,168.9 172.5,165.2 178.5,161.4 184.5,158.8 190.5,156.2 196.5,153.7 202.5,152.0 208.5,149.4 214.5,146.2 220.5,142.4 226.5,139.3 232.5,137.4 238.5,135.2 244.5,134.9 250.5,134.2 256.5,135.1 262.5,136.1 268.5,135.2 274.5,135.2 280.5,135.6 286.5,135.7 292.5,136.1 298.5,137.0 304.5,138.9 310.5,140.4 316.5,141.5 322.5,142.7 328.5,143.6 334.5,144.1 340.5,145.0 346.5,145.8 352.5,146.9 358.5,146.5 364.5,147.1 370.5,146.6 376.5,146.6 382.5,145.6 388.5,144.9 394.5,144.7 400.5,146.0 406.5,147.2 412.5,148.3 418.5,148.5 424.5,146.5 430.5,144.6 436.5,141.3 442.5,137.7 448.5,136.1 454.5,134.0 460.5,130.6 466.5,128.8 472.5,127.4 478.5,126.2 484.5,124.1 490.5,122.5 496.5,122.1 502.5,122.0 508.5,121.9 514.5,121.2 520.5,120.2 526.5,119.3 532.5,118.1 538.5,118.0 544.5,117.0 550.5,116.8 556.5,116.9 562.5,118.2 568.5,118.9 574.5,120.5 580.5,121.0 586.5,121.1 592.5,120.7 598.5,121.5 604.5,122.9 610.5,124.1 616.5,125.1 622.5,126.4 628.5,127.5 634.5,128.9 640.5,131.4 646.5,133.8 652.5,136.3 658.5,138.7 664.5,142.0 670.5,145.8 676.5,148.6 682.5,150.0 688.5,151.6 694.5,153.5 700.5,155.2 706.5,156.8 712.5,157.7 718.5,159.0 724.5,160.3 730.5,161.2 736.5,162.2 742.5,162.7 748.5,163.8 754.5,164.4 760.5,164.7 766.5,165.4 772.5,166.4 778.5,167.0 784.5,167.2" fill="none" stroke="#28dc28" stroke-width="1" stroke-linejoin="round" shape-rendering="crispEdges"/>
<polyline points="4.5,267.0 10.5,266.9 16.5,265.0 22.5,261.4 28.5,259.0 34.5,253.5 40.5,249.7 46.5,244.3 52.5,237.7 58.5,231.2 64.5,225.9 70.5,222.7 76.5,220.1 82.5,216.5 88.5,214.0 94.5,210.8 100.5,205.9 106.5,199.5 112.5,194.0 118.5,187.8 124.5,181.8 130.5,174.4 136.5,167.9 142.5,162.5 148.5,155.9 154.5,150.9 160.5,145.7 166.5,141.7 172.5,139.7 178.5,137.2 184.5,135.4 190.5,133.4 196.5,130.8 202.5,129.1 208.5,127.3 214.5,125.3 220.5,122.8 226.5,121.0 232.5,120.2 238.5,119.9 244.5,123.3 250.5,127.8 256.5,134.5 262.5,140.5 268.5,143.7 274.5,145.9 280.5,148.6 286.5,149.7 292.5,150.3 298.5,151.2 304.5,152.0 310.5,150.7 316.5,149.6 322.5,148.6 328.5,147.2 334.5,147.7 340.5,149.6 346.5,151.5 352.5,153.9 358.5,154.2 364.5,153.7 370.5,151.9 376.5,148.0 382.5,143.4 388.5,141.9 394.5,139.6 400.5,138.4 406.5,138.3 412.5,138.6 418.5,137.2 424.5,134.7 430.5,134.2 436.5,134.3 442.5,133.0 448.5,132.5 454.5,130.8 460.5,127.0 466.5,124.2 472.5,121.0 478.5,120.7 484.5,117.5 490.5,114.6 496.5,112.8 502.5,113.0 508.5,112.7 514.5,112.4 520.5,110.8 526.5,109.7 532.5,108.6 538.5,108.4 544.5,109.3 550.5,110.2 556.5,111.3 562.5,114.2 568.5,116.0 574.5,119.3 580.5,124.0 586.5,126.8 592.5,128.6 598.5,130.1 604.5,132.9 610.5,136.6 616.5,138.8 622.5,139.6 628.5,140.9 634.5,142.3 640.5,143.7 646.5,145.8 652.5,148.4 658.5,151.8 664.5,155.0 670.5,158.0 676.5,160.4 682.5,160.8 688.5,161.7 694.5,161.9 700.5,162.2 706.5,163.2 712.5,164.2 718.5,164.7 724.5,165.6 730.5,165.8 736.5,167.1 742.5,168.6 748.5,170.5 754.5,172.7 760.5,174.1 766.5,174.2 772.5,173.7 778.5,172.6 784.5,170.8" fill="none" stroke="#f040f0" stroke-width="1" stroke-linejoin="round" shape-rendering="crispEdges"/>
<polyline points="4.5,246.2 10.5,243.5 16.5,240.8 22.5,235.3 28.5,234.5 34.5,233.6 40.5,230.2 46.5,223.2 52.5,216.1 58.5,209.6 64.5,205.5 70.5,201.8 76.5,199.4 82.5,197.7 88.5,193.5 94.5,188.0 100.5,181.6 106.5,175.8 112.5,171.8 118.5,165.9 124.5,158.1 130.5,147.1 136.5,136.4 142.5,127.3 148.5,118.3 154.5,113.8 160.5,109.8 166.5,107.6 172.5,107.6 178.5,108.6 184.5,112.8 190.5,119.7 196.5,125.2 202.5,130.9 208.5,136.3 214.5,136.9 220.5,135.9 226.5,134.5 232.5,132.9 238.5,131.2 244.5,133.9 250.5,135.8 256.5,143.8 262.5,150.1 268.5,151.0 274.5,155.0 280.5,161.2 286.5,164.9 292.5,167.7 298.5,171.1 304.5,170.1 310.5,165.6 316.5,155.4 322.5,147.0 328.5,143.4 334.5,140.4 340.5,137.9 346.5,138.1 352.5,140.1 358.5,137.3 364.5,137.2 370.5,138.3 376.5,140.6 382.5,139.8 388.5,140.4 394.5,138.8 400.5,139.0 406.5,138.6 412.5,137.1 418.5,137.2 424.5,132.2 430.5,130.0 436.5,128.0 442.5,126.2 448.5,124.6 454.5,122.8 460.5,115.0 466.5,109.8 472.5,105.0 478.5,104.2 484.5,102.8 490.5,99.2 496.5,97.6 502.5,99.9 508.5,100.8 514.5,102.0 520.5,106.7 526.5,109.6 532.5,112.2 538.5,112.6 544.5,115.9 550.5,121.3 556.5,125.0 562.5,128.4 568.5,131.3 574.5,136.7 580.5,141.3 586.5,144.0 592.5,144.9 598.5,147.6 604.5,149.9 610.5,151.8 616.5,152.6 622.5,150.8 628.5,150.5 634.5,147.9 640.5,146.1 646.5,147.7 652.5,151.9 658.5,155.9 664.5,160.1 670.5,164.2 676.5,168.3 682.5,170.7 688.5,172.9 694.5,175.9 700.5,178.2 706.5,178.7 712.5,176.4 718.5,173.5 724.5,171.0 730.5,167.5 736.5,165.8 742.5,166.5 748.5,168.1 754.5,169.4 760.5,169.9 766.5,169.7 772.5,170.9 778.5,171.7 784.5,170.5" fill="none" stroke="#f0e820" stroke-width="1" stroke-linejoin="round" shape-rendering="crispEdges"/>
<polyline points="4.5,242.6 10.5,239.3 16.5,230.1 22.5,225.5 28.5,223.0 34.5,224.6 40.5,221.2 46.5,216.2 52.5,206.8 58.5,196.2 64.5,186.4 70.5,182.4 76.5,182.6 82.5,188.6 88.5,190.8 94.5,189.6 100.5,180.8 106.5,169.0 112.5,155.0 118.5,141.0 124.5,126.6 130.5,113.4 136.5,103.8 142.5,99.6 148.5,95.6 154.5,101.0 160.5,106.2 166.5,111.4 172.5,115.6 178.5,121.6 184.5,124.6 190.5,133.2 196.5,139.0 202.5,146.2 208.5,151.0 214.5,149.2 220.5,138.6 226.5,130.0 232.5,119.6 238.5,111.4 244.5,118.6 250.5,133.0 256.5,157.6 262.5,180.6 268.5,190.6 274.5,191.4 280.5,189.4 286.5,172.2 292.5,154.8 298.5,151.6 304.5,148.8 310.5,141.8 316.5,138.6 322.5,139.2 328.5,135.2 334.5,132.0 340.5,134.0 346.5,137.6 352.5,141.0 358.5,139.4 364.5,142.4 370.5,142.6 376.5,143.6 382.5,138.6 388.5,141.4 394.5,135.2 400.5,135.4 406.5,133.6 412.5,135.6 418.5,133.0 424.5,129.2 430.5,124.6 436.5,122.4 442.5,116.8 448.5,116.2 454.5,116.4 460.5,105.4 466.5,97.2 472.5,93.2 478.5,92.2 484.5,89.2 490.5,93.0 496.5,98.0 502.5,106.6 508.5,109.4 514.5,114.8 520.5,120.4 526.5,121.2 532.5,117.8 538.5,115.8 544.5,117.0 550.5,122.2 556.5,128.8 562.5,139.0 568.5,146.8 574.5,156.4 580.5,160.4 586.5,159.2 592.5,150.8 598.5,148.4 604.5,143.4 610.5,143.2 616.5,146.0 622.5,150.8 628.5,152.6 634.5,152.4 640.5,149.0 646.5,149.4 652.5,153.0 658.5,159.2 664.5,167.8 670.5,179.4 676.5,187.2 682.5,188.4 688.5,186.6 694.5,184.0 700.5,177.0 706.5,170.2 712.5,164.4 718.5,160.4 724.5,158.0 730.5,158.0 736.5,161.4 742.5,168.6 748.5,175.8 754.5,180.8 760.5,181.8 766.5,178.0 772.5,173.2 778.5,167.6 784.5,160.2" fill="none" stroke="#eeeeee" stroke-width="1" stroke-linejoin="round" shape-rendering="crispEdges"/>
<line x1="1" y1="149.5" x2="815" y2="149.5" stroke="#f08a28" stroke-width="1" stroke-dasharray="3 3"/>
<line x1="815" y1="149.5" x2="869" y2="149.5" stroke="#f08a28" stroke-width="1"/>
<line x1="1" y1="157.5" x2="813" y2="157.5" stroke="#ff1e1e" stroke-width="1.2"/>
<line x1="1" y1="191.5" x2="813" y2="191.5" stroke="#ff8c1a" stroke-width="1.2"/>
<line x1="0" y1="271" x2="813" y2="132" stroke="#8080ff" stroke-width="2.6" shape-rendering="crispEdges"/>
<polyline points="51.2,140.6 51.3,137.6 51.5,134.7 51.8,131.7 52.1,128.8 52.5,125.9 53.0,123.0 53.6,120.1 54.2,117.2 55.0,114.3 55.7,111.4 56.6,108.6 57.5,105.8 58.5,103.0 59.6,100.3 60.8,97.5 62.0,94.8 63.3,92.2 64.6,89.5 66.0,86.9 67.5,84.4 69.1,81.9 70.7,79.4 72.4,77.0 74.1,74.6 75.9,72.2 77.8,69.9 79.7,67.7 81.7,65.5 83.7,63.3 85.8,61.2 88.0,59.2 90.2,57.2 92.4,55.3 94.7,53.4 97.0,51.6 99.4,49.9 101.9,48.2 104.3,46.6 106.9,45.0 109.4,43.5 112.0,42.1 114.6,40.7 117.3,39.4 120.0,38.2 122.7,37.1 125.5,36.0 128.3,35.0 131.1,34.0 133.9,33.2 136.7,32.4 139.6,31.7 142.5,31.0 145.4,30.5 148.3,30.0 151.2,29.6 154.2,29.2 157.1,28.9 160.1,28.8 163.0,28.6 166.0,28.6 169.0,28.6 171.9,28.8 174.9,28.9 177.8,29.2 180.8,29.6 183.7,30.0 186.6,30.5 189.5,31.0 192.4,31.7 195.3,32.4 198.1,33.2 200.9,34.0 203.7,35.0 206.5,36.0 209.3,37.1 212.0,38.2 214.7,39.4 217.4,40.7 220.0,42.1 222.6,43.5 225.1,45.0 227.7,46.6 230.1,48.2 232.6,49.9 235.0,51.6 237.3,53.4 239.6,55.3 241.8,57.2 244.0,59.2 246.2,61.2 248.3,63.3 250.3,65.5 252.3,67.7 254.2,69.9 256.1,72.2 257.9,74.6 259.6,77.0 261.3,79.4 262.9,81.9 264.5,84.4 266.0,86.9 267.4,89.5 268.7,92.2 270.0,94.8 271.2,97.5 272.4,100.3 273.5,103.0 274.5,105.8 275.4,108.6 276.3,111.4 277.0,114.3 277.8,117.2 278.4,120.1 279.0,123.0 279.5,125.9 279.9,128.8 280.2,131.7 280.5,134.7 280.7,137.6 280.8,140.6" fill="none" stroke="#7a7aff" stroke-width="1.3" stroke-linejoin="round" shape-rendering="crispEdges"/>
<polyline points="406.2,91.3 406.4,89.5 406.6,87.7 406.9,86.0 407.1,84.2 407.5,82.4 407.9,80.7 408.3,79.0 408.8,77.2 409.3,75.5 409.8,73.8 410.4,72.1 411.1,70.5 411.8,68.8 412.5,67.2 413.2,65.5 414.0,63.9 414.9,62.4 415.8,60.8 416.7,59.3 417.6,57.8 418.6,56.3 419.7,54.8 420.7,53.4 421.8,52.0 423.0,50.6 424.1,49.2 425.3,47.9 426.6,46.6 427.8,45.3 429.1,44.1 430.5,42.9 431.8,41.7 433.2,40.6 434.6,39.5 436.1,38.5 437.5,37.4 439.0,36.5 440.6,35.5 442.1,34.6 443.7,33.7 445.2,32.9 446.8,32.1 448.5,31.3 450.1,30.6 451.8,29.9 453.4,29.3 455.1,28.7 456.8,28.2 458.6,27.7 460.3,27.2 462.0,26.8 463.8,26.4 465.5,26.1 467.3,25.8 469.1,25.6 470.9,25.4 472.6,25.2 474.4,25.1 476.2,25.0 478.0,25.0 479.8,25.0 481.6,25.1 483.4,25.2 485.1,25.4 486.9,25.6 488.7,25.8 490.5,26.1 492.2,26.4 494.0,26.8 495.7,27.2 497.4,27.7 499.2,28.2 500.9,28.7 502.6,29.3 504.2,29.9 505.9,30.6 507.5,31.3 509.2,32.1 510.8,32.9 512.3,33.7 513.9,34.6 515.4,35.5 517.0,36.5 518.5,37.4 519.9,38.5 521.4,39.5 522.8,40.6 524.2,41.7 525.5,42.9 526.9,44.1 528.2,45.3 529.4,46.6 530.7,47.9 531.9,49.2 533.0,50.6 534.2,52.0 535.3,53.4 536.3,54.8 537.4,56.3 538.4,57.8 539.3,59.3 540.2,60.8 541.1,62.4 542.0,63.9 542.8,65.5 543.5,67.2 544.2,68.8 544.9,70.5 545.6,72.1 546.2,73.8 546.7,75.5 547.2,77.2 547.7,79.0 548.1,80.7 548.5,82.4 548.9,84.2 549.1,86.0 549.4,87.7 549.6,89.5 549.8,91.3" fill="none" stroke="#7a7aff" stroke-width="1.3" stroke-linejoin="round" shape-rendering="crispEdges"/>
<polyline points="640.0,192.5 640.4,192.9 640.8,193.2 641.3,193.5 641.7,193.9 642.1,194.2 642.6,194.5 643.0,194.9 643.4,195.2 643.9,195.5 644.3,195.8 644.8,196.1 645.2,196.4 645.7,196.7 646.2,197.0 646.6,197.2 647.1,197.5 647.6,197.8 648.1,198.0 648.5,198.3 649.0,198.5 649.5,198.8 650.0,199.0 650.5,199.3 651.0,199.5 651.5,199.7 652.0,199.9 652.5,200.1 653.0,200.3 653.5,200.5 654.0,200.7 654.5,200.9 655.0,201.1 655.5,201.3 656.1,201.4 656.6,201.6 657.1,201.8 657.6,201.9 658.2,202.1 658.7,202.2 659.2,202.3 659.7,202.4 660.3,202.6 660.8,202.7 661.3,202.8 661.9,202.9 662.4,203.0 662.9,203.1 663.5,203.1 664.0,203.2 664.6,203.3 665.1,203.3 665.7,203.4 666.2,203.4 666.7,203.5 667.3,203.5 667.8,203.5 668.4,203.6 668.9,203.6 669.5,203.6 670.0,203.6 670.5,203.6 671.1,203.6 671.6,203.6 672.2,203.5 672.7,203.5 673.3,203.5 673.8,203.4 674.3,203.4 674.9,203.3 675.4,203.3 676.0,203.2 676.5,203.1 677.1,203.1 677.6,203.0 678.1,202.9 678.7,202.8 679.2,202.7 679.7,202.6 680.3,202.4 680.8,202.3 681.3,202.2 681.8,202.1 682.4,201.9 682.9,201.8 683.4,201.6 683.9,201.4 684.5,201.3 685.0,201.1 685.5,200.9 686.0,200.7 686.5,200.5 687.0,200.3 687.5,200.1 688.0,199.9 688.5,199.7 689.0,199.5 689.5,199.3 690.0,199.0 690.5,198.8 691.0,198.5 691.5,198.3 691.9,198.0 692.4,197.8 692.9,197.5 693.4,197.2 693.8,197.0 694.3,196.7 694.8,196.4 695.2,196.1 695.7,195.8 696.1,195.5 696.6,195.2 697.0,194.9 697.4,194.5 697.9,194.2 698.3,193.9 698.7,193.5 699.2,193.2 699.6,192.9 700.0,192.5" fill="none" stroke="#ff1a1a" stroke-width="1" stroke-linejoin="round" shape-rendering="crispEdges"/>
<polyline points="723.7,193.3 724.1,193.6 724.4,193.8 724.8,194.1 725.1,194.3 725.5,194.6 725.9,194.8 726.2,195.1 726.6,195.3 727.0,195.5 727.3,195.7 727.7,196.0 728.1,196.2 728.5,196.4 728.8,196.6 729.2,196.8 729.6,197.0 730.0,197.2 730.4,197.4 730.8,197.6 731.2,197.8 731.6,198.0 732.0,198.1 732.4,198.3 732.8,198.5 733.2,198.6 733.6,198.8 734.0,199.0 734.4,199.1 734.8,199.3 735.2,199.4 735.6,199.5 736.0,199.7 736.4,199.8 736.9,199.9 737.3,200.0 737.7,200.1 738.1,200.3 738.5,200.4 739.0,200.5 739.4,200.6 739.8,200.7 740.2,200.7 740.7,200.8 741.1,200.9 741.5,201.0 741.9,201.0 742.4,201.1 742.8,201.2 743.2,201.2 743.7,201.3 744.1,201.3 744.5,201.3 745.0,201.4 745.4,201.4 745.8,201.4 746.3,201.5 746.7,201.5 747.1,201.5 747.6,201.5 748.0,201.5 748.4,201.5 748.9,201.5 749.3,201.5 749.7,201.5 750.2,201.4 750.6,201.4 751.0,201.4 751.5,201.3 751.9,201.3 752.3,201.3 752.8,201.2 753.2,201.2 753.6,201.1 754.1,201.0 754.5,201.0 754.9,200.9 755.3,200.8 755.8,200.7 756.2,200.7 756.6,200.6 757.0,200.5 757.5,200.4 757.9,200.3 758.3,200.1 758.7,200.0 759.1,199.9 759.6,199.8 760.0,199.7 760.4,199.5 760.8,199.4 761.2,199.3 761.6,199.1 762.0,199.0 762.4,198.8 762.8,198.6 763.2,198.5 763.6,198.3 764.0,198.1 764.4,198.0 764.8,197.8 765.2,197.6 765.6,197.4 766.0,197.2 766.4,197.0 766.8,196.8 767.2,196.6 767.5,196.4 767.9,196.2 768.3,196.0 768.7,195.7 769.0,195.5 769.4,195.3 769.8,195.1 770.1,194.8 770.5,194.6 770.9,194.3 771.2,194.1 771.6,193.8 771.9,193.6 772.3,193.3" fill="none" stroke="#ff1a1a" stroke-width="1" stroke-linejoin="round" shape-rendering="crispEdges"/>
<path d="M 127.0 79.5 h7 M 130.5 76.0 v7" stroke="#ffffff" stroke-width="1"/>
<path d="M 463.0 48.5 h7 M 466.5 45.0 v7" stroke="#ffffff" stroke-width="1"/>
<path d="M 265.0 229.5 h7 M 268.5 226.0 v7" stroke="#ffffff" stroke-width="1"/>
<path d="M 1.0 245.5 h7 M 4.5 242.0 v7" stroke="#ffffff" stroke-width="1"/>
<path d="M 673.0 203.5 h7 M 676.5 200.0 v7" stroke="#ffffff" stroke-width="1"/>
<text x="136.3" y="76" fill="#f0334d" font-size="12" font-weight="bold" textLength="36.3" lengthAdjust="spacingAndGlyphs" >1.1829</text>
<text x="472.3" y="45.7" fill="#f0334d" font-size="12" font-weight="bold" textLength="36.5" lengthAdjust="spacingAndGlyphs" >1.1918</text>
<text x="9.6" y="257" fill="#44c282" font-size="12" font-weight="bold" textLength="36.9" lengthAdjust="spacingAndGlyphs" >1.1344</text>
<text x="274.2" y="241" fill="#44c282" font-size="12" font-weight="bold" textLength="35.8" lengthAdjust="spacingAndGlyphs" >1.1391</text>
<text x="681.9" y="214.6" fill="#44c282" font-size="12" font-weight="bold" textLength="36.5" lengthAdjust="spacingAndGlyphs" >1.1468</text>
<text x="777" y="154" fill="#ff1a1a" font-size="12" font-weight="normal" textLength="36" lengthAdjust="spacingAndGlyphs" stroke="#ff1a1a" stroke-width="0.35">1.1600</text>
<text x="777" y="187.6" fill="#ff9a10" font-size="12" font-weight="normal" textLength="36" lengthAdjust="spacingAndGlyphs" stroke="#ff9a10" stroke-width="0.35">1.1501</text>
<text x="817.7" y="29" fill="#e8304a" font-size="12" font-weight="normal" textLength="36.5" lengthAdjust="spacingAndGlyphs" >1.1987</text>
<text x="817.7" y="83.5" fill="#e8304a" font-size="12" font-weight="normal" textLength="36.5" lengthAdjust="spacingAndGlyphs" >1.1828</text>
<text x="817.7" y="137" fill="#e8304a" font-size="12" font-weight="normal" textLength="36.5" lengthAdjust="spacingAndGlyphs" >1.1668</text>
<text x="817.7" y="192" fill="#e8304a" font-size="12" font-weight="normal" textLength="36.5" lengthAdjust="spacingAndGlyphs" >1.1509</text>
<text x="817.7" y="246" fill="#e8304a" font-size="12" font-weight="normal" textLength="36.5" lengthAdjust="spacingAndGlyphs" >1.1350</text>
<text x="817.7" y="301" fill="#e8304a" font-size="12" font-weight="normal" textLength="36.5" lengthAdjust="spacingAndGlyphs" >1.1191</text>
<text x="817.7" y="355" fill="#e8304a" font-size="12" font-weight="normal" textLength="36.5" lengthAdjust="spacingAndGlyphs" >1.1032</text>
<rect x="814.5" y="270.5" width="60" height="17" fill="#000" stroke="#3a3a3a" stroke-width="1"/>
<text x="817.5" y="283" fill="#f09028" font-size="12" font-weight="normal" textLength="36.5" lengthAdjust="spacingAndGlyphs" >1.1270</text>
<text x="817.7" y="431" fill="#e8304a" font-size="12" font-weight="normal" textLength="36.5" lengthAdjust="spacingAndGlyphs" >0.0112</text>
<text x="817.7" y="456" fill="#e8304a" font-size="12" font-weight="normal" textLength="36.5" lengthAdjust="spacingAndGlyphs" >0.0063</text>
<text x="817.7" y="481.6" fill="#e8304a" font-size="12" font-weight="normal" textLength="36.5" lengthAdjust="spacingAndGlyphs" >0.0015</text>
<text x="817.7" y="508.3" fill="#e8304a" font-size="12" font-weight="normal" textLength="40.5" lengthAdjust="spacingAndGlyphs" >-0.0034</text>
<text x="817.7" y="556.1" fill="#e8304a" font-size="12" font-weight="normal" textLength="43.5" lengthAdjust="spacingAndGlyphs" >75.0822</text>
<text x="817.7" y="583.1" fill="#e8304a" font-size="12" font-weight="normal" textLength="43.5" lengthAdjust="spacingAndGlyphs" >64.4631</text>
<text x="817.7" y="609.9" fill="#e8304a" font-size="12" font-weight="normal" textLength="43.5" lengthAdjust="spacingAndGlyphs" >53.8440</text>
<text x="817.7" y="636.7" fill="#e8304a" font-size="12" font-weight="normal" textLength="43.5" lengthAdjust="spacingAndGlyphs" >42.2250</text>
<line x1="4.5" y1="488.0" x2="4.5" y2="479.4" stroke="#f23c5a" stroke-width="1.4"/>
<line x1="10.5" y1="488.0" x2="10.5" y2="481.1" stroke="#f23c5a" stroke-width="1.4"/>
<line x1="16.5" y1="488.0" x2="16.5" y2="479.9" stroke="#f23c5a" stroke-width="1.4"/>
<line x1="22.5" y1="488.0" x2="22.5" y2="477.8" stroke="#f23c5a" stroke-width="1.4"/>
<line x1="28.5" y1="488.0" x2="28.5" y2="481.3" stroke="#f23c5a" stroke-width="1.4"/>
<line x1="34.5" y1="488.0" x2="34.5" y2="482.7" stroke="#f23c5a" stroke-width="1.4"/>
<line x1="40.5" y1="488.0" x2="40.5" y2="483.9" stroke="#f23c5a" stroke-width="1.4"/>
<line x1="46.5" y1="488.0" x2="46.5" y2="480.5" stroke="#f23c5a" stroke-width="1.4"/>
<line x1="52.5" y1="488.0" x2="52.5" y2="472.6" stroke="#f23c5a" stroke-width="1.4"/>
<line x1="58.5" y1="488.0" x2="58.5" y2="471.5" stroke="#f23c5a" stroke-width="1.4"/>
<line x1="64.5" y1="488.0" x2="64.5" y2="471.5" stroke="#f23c5a" stroke-width="1.4"/>
<line x1="70.5" y1="488.0" x2="70.5" y2="478.6" stroke="#f23c5a" stroke-width="1.4"/>
<line x1="76.5" y1="488.0" x2="76.5" y2="483.8" stroke="#f23c5a" stroke-width="1.4"/>
<line x1="82.5" y1="488.0" x2="82.5" y2="487.3" stroke="#f23c5a" stroke-width="1.4"/>
<line x1="88.5" y1="488.0" x2="88.5" y2="488.7" stroke="#3cc884" stroke-width="1.4"/>
<line x1="94.5" y1="488.0" x2="94.5" y2="485.8" stroke="#f23c5a" stroke-width="1.4"/>
<line x1="100.5" y1="488.0" x2="100.5" y2="482.5" stroke="#f23c5a" stroke-width="1.4"/>
<line x1="106.5" y1="488.0" x2="106.5" y2="477.8" stroke="#f23c5a" stroke-width="1.4"/>
<line x1="112.5" y1="488.0" x2="112.5" y2="473.2" stroke="#f23c5a" stroke-width="1.4"/>
<line x1="118.5" y1="488.0" x2="118.5" y2="470.3" stroke="#f23c5a" stroke-width="1.4"/>
<line x1="124.5" y1="488.0" x2="124.5" y2="465.4" stroke="#f23c5a" stroke-width="1.4"/>
<line x1="130.5" y1="488.0" x2="130.5" y2="463.2" stroke="#f23c5a" stroke-width="1.4"/>
<line x1="136.5" y1="488.0" x2="136.5" y2="464.3" stroke="#f23c5a" stroke-width="1.4"/>
<line x1="142.5" y1="488.0" x2="142.5" y2="469.9" stroke="#f23c5a" stroke-width="1.4"/>
<line x1="148.5" y1="488.0" x2="148.5" y2="474.0" stroke="#f23c5a" stroke-width="1.4"/>
<line x1="154.5" y1="488.0" x2="154.5" y2="483.4" stroke="#f23c5a" stroke-width="1.4"/>
<line x1="160.5" y1="488.0" x2="160.5" y2="489.3" stroke="#3cc884" stroke-width="1.4"/>
<line x1="166.5" y1="488.0" x2="166.5" y2="494.2" stroke="#3cc884" stroke-width="1.4"/>
<line x1="172.5" y1="488.0" x2="172.5" y2="499.6" stroke="#3cc884" stroke-width="1.4"/>
<line x1="178.5" y1="488.0" x2="178.5" y2="504.0" stroke="#3cc884" stroke-width="1.4"/>
<line x1="184.5" y1="488.0" x2="184.5" y2="508.7" stroke="#3cc884" stroke-width="1.4"/>
<line x1="190.5" y1="488.0" x2="190.5" y2="516.1" stroke="#3cc884" stroke-width="1.4"/>
<line x1="196.5" y1="488.0" x2="196.5" y2="517.4" stroke="#3cc884" stroke-width="1.4"/>
<line x1="202.5" y1="488.0" x2="202.5" y2="520.5" stroke="#3cc884" stroke-width="1.4"/>
<line x1="208.5" y1="488.0" x2="208.5" y2="519.6" stroke="#3cc884" stroke-width="1.4"/>
<line x1="214.5" y1="488.0" x2="214.5" y2="513.0" stroke="#3cc884" stroke-width="1.4"/>
<line x1="220.5" y1="488.0" x2="220.5" y2="503.4" stroke="#3cc884" stroke-width="1.4"/>
<line x1="226.5" y1="488.0" x2="226.5" y2="496.5" stroke="#3cc884" stroke-width="1.4"/>
<line x1="232.5" y1="488.0" x2="232.5" y2="493.5" stroke="#3cc884" stroke-width="1.4"/>
<line x1="238.5" y1="488.0" x2="238.5" y2="492.3" stroke="#3cc884" stroke-width="1.4"/>
<line x1="244.5" y1="488.0" x2="244.5" y2="502.9" stroke="#3cc884" stroke-width="1.4"/>
<line x1="250.5" y1="488.0" x2="250.5" y2="512.1" stroke="#3cc884" stroke-width="1.4"/>
<line x1="256.5" y1="488.0" x2="256.5" y2="527.1" stroke="#3cc884" stroke-width="1.4"/>
<line x1="262.5" y1="488.0" x2="262.5" y2="534.4" stroke="#3cc884" stroke-width="1.4"/>
<line x1="268.5" y1="488.0" x2="268.5" y2="523.4" stroke="#3cc884" stroke-width="1.4"/>
<line x1="274.5" y1="488.0" x2="274.5" y2="516.3" stroke="#3cc884" stroke-width="1.4"/>
<line x1="280.5" y1="488.0" x2="280.5" y2="510.4" stroke="#3cc884" stroke-width="1.4"/>
<line x1="286.5" y1="488.0" x2="286.5" y2="499.7" stroke="#3cc884" stroke-width="1.4"/>
<line x1="292.5" y1="488.0" x2="292.5" y2="491.7" stroke="#3cc884" stroke-width="1.4"/>
<line x1="298.5" y1="488.0" x2="298.5" y2="488.1" stroke="#3cc884" stroke-width="1.4"/>
<line x1="304.5" y1="488.0" x2="304.5" y2="487.8" stroke="#f23c5a" stroke-width="1.4"/>
<line x1="310.5" y1="488.0" x2="310.5" y2="483.1" stroke="#f23c5a" stroke-width="1.4"/>
<line x1="316.5" y1="488.0" x2="316.5" y2="478.5" stroke="#f23c5a" stroke-width="1.4"/>
<line x1="322.5" y1="488.0" x2="322.5" y2="479.5" stroke="#f23c5a" stroke-width="1.4"/>
<line x1="328.5" y1="488.0" x2="328.5" y2="477.4" stroke="#f23c5a" stroke-width="1.4"/>
<line x1="334.5" y1="488.0" x2="334.5" y2="479.5" stroke="#f23c5a" stroke-width="1.4"/>
<line x1="340.5" y1="488.0" x2="340.5" y2="482.3" stroke="#f23c5a" stroke-width="1.4"/>
<line x1="346.5" y1="488.0" x2="346.5" y2="484.3" stroke="#f23c5a" stroke-width="1.4"/>
<line x1="352.5" y1="488.0" x2="352.5" y2="488.9" stroke="#3cc884" stroke-width="1.4"/>
<line x1="358.5" y1="488.0" x2="358.5" y2="483.5" stroke="#f23c5a" stroke-width="1.4"/>
<line x1="364.5" y1="488.0" x2="364.5" y2="487.9" stroke="#f23c5a" stroke-width="1.4"/>
<line x1="370.5" y1="488.0" x2="370.5" y2="488.9" stroke="#3cc884" stroke-width="1.4"/>
<line x1="376.5" y1="488.0" x2="376.5" y2="490.2" stroke="#3cc884" stroke-width="1.4"/>
<line x1="382.5" y1="488.0" x2="382.5" y2="487.9" stroke="#f23c5a" stroke-width="1.4"/>
<line x1="388.5" y1="488.0" x2="388.5" y2="486.3" stroke="#f23c5a" stroke-width="1.4"/>
<line x1="394.5" y1="488.0" x2="394.5" y2="483.6" stroke="#f23c5a" stroke-width="1.4"/>
<line x1="400.5" y1="488.0" x2="400.5" y2="487.0" stroke="#f23c5a" stroke-width="1.4"/>
<line x1="406.5" y1="488.0" x2="406.5" y2="487.9" stroke="#f23c5a" stroke-width="1.4"/>
<line x1="412.5" y1="488.0" x2="412.5" y2="489.4" stroke="#3cc884" stroke-width="1.4"/>
<line x1="418.5" y1="488.0" x2="418.5" y2="485.3" stroke="#f23c5a" stroke-width="1.4"/>
<line x1="424.5" y1="488.0" x2="424.5" y2="479.8" stroke="#f23c5a" stroke-width="1.4"/>
<line x1="430.5" y1="488.0" x2="430.5" y2="481.0" stroke="#f23c5a" stroke-width="1.4"/>
<line x1="436.5" y1="488.0" x2="436.5" y2="483.2" stroke="#f23c5a" stroke-width="1.4"/>
<line x1="442.5" y1="488.0" x2="442.5" y2="482.3" stroke="#f23c5a" stroke-width="1.4"/>
<line x1="448.5" y1="488.0" x2="448.5" y2="482.4" stroke="#f23c5a" stroke-width="1.4"/>
<line x1="454.5" y1="488.0" x2="454.5" y2="480.6" stroke="#f23c5a" stroke-width="1.4"/>
<line x1="460.5" y1="488.0" x2="460.5" y2="472.3" stroke="#f23c5a" stroke-width="1.4"/>
<line x1="466.5" y1="488.0" x2="466.5" y2="472.2" stroke="#f23c5a" stroke-width="1.4"/>
<line x1="472.5" y1="488.0" x2="472.5" y2="474.9" stroke="#f23c5a" stroke-width="1.4"/>
<line x1="478.5" y1="488.0" x2="478.5" y2="480.9" stroke="#f23c5a" stroke-width="1.4"/>
<line x1="484.5" y1="488.0" x2="484.5" y2="480.9" stroke="#f23c5a" stroke-width="1.4"/>
<line x1="490.5" y1="488.0" x2="490.5" y2="481.0" stroke="#f23c5a" stroke-width="1.4"/>
<line x1="496.5" y1="488.0" x2="496.5" y2="487.0" stroke="#f23c5a" stroke-width="1.4"/>
<line x1="502.5" y1="488.0" x2="502.5" y2="496.7" stroke="#3cc884" stroke-width="1.4"/>
<line x1="508.5" y1="488.0" x2="508.5" y2="499.9" stroke="#3cc884" stroke-width="1.4"/>
<line x1="514.5" y1="488.0" x2="514.5" y2="499.8" stroke="#3cc884" stroke-width="1.4"/>
<line x1="520.5" y1="488.0" x2="520.5" y2="499.1" stroke="#3cc884" stroke-width="1.4"/>
<line x1="526.5" y1="488.0" x2="526.5" y2="498.5" stroke="#3cc884" stroke-width="1.4"/>
<line x1="532.5" y1="488.0" x2="532.5" y2="498.8" stroke="#3cc884" stroke-width="1.4"/>
<line x1="538.5" y1="488.0" x2="538.5" y2="497.4" stroke="#3cc884" stroke-width="1.4"/>
<line x1="544.5" y1="488.0" x2="544.5" y2="497.9" stroke="#3cc884" stroke-width="1.4"/>
<line x1="550.5" y1="488.0" x2="550.5" y2="501.6" stroke="#3cc884" stroke-width="1.4"/>
<line x1="556.5" y1="488.0" x2="556.5" y2="505.0" stroke="#3cc884" stroke-width="1.4"/>
<line x1="562.5" y1="488.0" x2="562.5" y2="511.2" stroke="#3cc884" stroke-width="1.4"/>
<line x1="568.5" y1="488.0" x2="568.5" y2="510.1" stroke="#3cc884" stroke-width="1.4"/>
<line x1="574.5" y1="488.0" x2="574.5" y2="511.8" stroke="#3cc884" stroke-width="1.4"/>
<line x1="580.5" y1="488.0" x2="580.5" y2="509.4" stroke="#3cc884" stroke-width="1.4"/>
<line x1="586.5" y1="488.0" x2="586.5" y2="502.9" stroke="#3cc884" stroke-width="1.4"/>
<line x1="592.5" y1="488.0" x2="592.5" y2="495.2" stroke="#3cc884" stroke-width="1.4"/>
<line x1="598.5" y1="488.0" x2="598.5" y2="492.3" stroke="#3cc884" stroke-width="1.4"/>
<line x1="604.5" y1="488.0" x2="604.5" y2="490.9" stroke="#3cc884" stroke-width="1.4"/>
<line x1="610.5" y1="488.0" x2="610.5" y2="492.7" stroke="#3cc884" stroke-width="1.4"/>
<line x1="616.5" y1="488.0" x2="616.5" y2="492.7" stroke="#3cc884" stroke-width="1.4"/>
<line x1="622.5" y1="488.0" x2="622.5" y2="491.6" stroke="#3cc884" stroke-width="1.4"/>
<line x1="628.5" y1="488.0" x2="628.5" y2="489.9" stroke="#3cc884" stroke-width="1.4"/>
<line x1="634.5" y1="488.0" x2="634.5" y2="487.3" stroke="#f23c5a" stroke-width="1.4"/>
<line x1="640.5" y1="488.0" x2="640.5" y2="485.0" stroke="#f23c5a" stroke-width="1.4"/>
<line x1="646.5" y1="488.0" x2="646.5" y2="486.9" stroke="#f23c5a" stroke-width="1.4"/>
<line x1="652.5" y1="488.0" x2="652.5" y2="490.6" stroke="#3cc884" stroke-width="1.4"/>
<line x1="658.5" y1="488.0" x2="658.5" y2="494.7" stroke="#3cc884" stroke-width="1.4"/>
<line x1="664.5" y1="488.0" x2="664.5" y2="498.0" stroke="#3cc884" stroke-width="1.4"/>
<line x1="670.5" y1="488.0" x2="670.5" y2="502.0" stroke="#3cc884" stroke-width="1.4"/>
<line x1="676.5" y1="488.0" x2="676.5" y2="502.8" stroke="#3cc884" stroke-width="1.4"/>
<line x1="682.5" y1="488.0" x2="682.5" y2="498.0" stroke="#3cc884" stroke-width="1.4"/>
<line x1="688.5" y1="488.0" x2="688.5" y2="493.1" stroke="#3cc884" stroke-width="1.4"/>
<line x1="694.5" y1="488.0" x2="694.5" y2="489.9" stroke="#3cc884" stroke-width="1.4"/>
<line x1="700.5" y1="488.0" x2="700.5" y2="485.5" stroke="#f23c5a" stroke-width="1.4"/>
<line x1="706.5" y1="488.0" x2="706.5" y2="482.1" stroke="#f23c5a" stroke-width="1.4"/>
<line x1="712.5" y1="488.0" x2="712.5" y2="476.8" stroke="#f23c5a" stroke-width="1.4"/>
<line x1="718.5" y1="488.0" x2="718.5" y2="474.5" stroke="#f23c5a" stroke-width="1.4"/>
<line x1="724.5" y1="488.0" x2="724.5" y2="475.7" stroke="#f23c5a" stroke-width="1.4"/>
<line x1="730.5" y1="488.0" x2="730.5" y2="477.4" stroke="#f23c5a" stroke-width="1.4"/>
<line x1="736.5" y1="488.0" x2="736.5" y2="482.0" stroke="#f23c5a" stroke-width="1.4"/>
<line x1="742.5" y1="488.0" x2="742.5" y2="485.8" stroke="#f23c5a" stroke-width="1.4"/>
<line x1="748.5" y1="488.0" x2="748.5" y2="488.9" stroke="#3cc884" stroke-width="1.4"/>
<line x1="754.5" y1="488.0" x2="754.5" y2="490.4" stroke="#3cc884" stroke-width="1.4"/>
<line x1="760.5" y1="488.0" x2="760.5" y2="487.4" stroke="#f23c5a" stroke-width="1.4"/>
<line x1="766.5" y1="488.0" x2="766.5" y2="483.4" stroke="#f23c5a" stroke-width="1.4"/>
<line x1="772.5" y1="488.0" x2="772.5" y2="480.8" stroke="#f23c5a" stroke-width="1.4"/>
<line x1="778.5" y1="488.0" x2="778.5" y2="479.3" stroke="#f23c5a" stroke-width="1.4"/>
<line x1="784.5" y1="488.0" x2="784.5" y2="476.6" stroke="#f23c5a" stroke-width="1.4"/>
<polyline points="4.5,467.2 10.5,466.4 16.5,465.4 22.5,464.2 28.5,463.5 34.5,462.8 40.5,462.4 46.5,461.5 52.5,459.7 58.5,457.8 64.5,455.9 70.5,454.8 76.5,454.3 82.5,454.2 88.5,454.3 94.5,454.0 100.5,453.4 106.5,452.2 112.5,450.5 118.5,448.4 124.5,445.8 130.5,442.9 136.5,440.2 142.5,438.0 148.5,436.4 154.5,435.9 160.5,436.0 166.5,436.8 172.5,438.1 178.5,440.0 184.5,442.4 190.5,445.6 196.5,449.1 202.5,452.8 208.5,456.5 214.5,459.4 220.5,461.2 226.5,462.2 232.5,462.8 238.5,463.3 244.5,465.1 250.5,467.9 256.5,472.4 262.5,477.8 268.5,481.9 274.5,485.2 280.5,487.8 286.5,489.2 292.5,489.6 298.5,489.6 304.5,489.6 310.5,489.0 316.5,487.9 322.5,487.0 328.5,485.7 334.5,484.7 340.5,484.1 346.5,483.6 352.5,483.7 358.5,483.2 364.5,483.2 370.5,483.3 376.5,483.6 382.5,483.6 388.5,483.4 394.5,482.8 400.5,482.7 406.5,482.7 412.5,482.9 418.5,482.6 424.5,481.6 430.5,480.8 436.5,480.3 442.5,479.6 448.5,478.9 454.5,478.1 460.5,476.3 466.5,474.4 472.5,472.9 478.5,472.1 484.5,471.2 490.5,470.4 496.5,470.3 502.5,471.3 508.5,472.7 514.5,474.1 520.5,475.4 526.5,476.6 532.5,477.8 538.5,478.9 544.5,480.1 550.5,481.7 556.5,483.6 562.5,486.3 568.5,488.9 574.5,491.7 580.5,494.2 586.5,495.9 592.5,496.7 598.5,497.2 604.5,497.6 610.5,498.1 616.5,498.7 622.5,499.1 628.5,499.3 634.5,499.2 640.5,498.9 646.5,498.8 652.5,499.1 658.5,499.8 664.5,501.0 670.5,502.6 676.5,504.3 682.5,505.5 688.5,506.1 694.5,506.3 700.5,506.0 706.5,505.3 712.5,504.0 718.5,502.5 724.5,501.0 730.5,499.8 736.5,499.1 742.5,498.8 748.5,498.9 754.5,499.2 760.5,499.2 766.5,498.6 772.5,497.8 778.5,496.8 784.5,495.4" fill="none" stroke="#f0e820" stroke-width="1" stroke-linejoin="round" shape-rendering="crispEdges"/>
<polyline points="4.5,463.2 10.5,463.2 16.5,461.6 22.5,459.5 28.5,460.4 34.5,460.4 40.5,460.4 46.5,458.0 52.5,452.5 58.5,450.1 64.5,448.2 70.5,450.4 76.5,452.3 82.5,453.9 88.5,454.6 94.5,453.0 100.5,450.8 106.5,447.5 112.5,443.6 118.5,440.2 124.5,435.3 130.5,431.4 136.5,429.1 142.5,429.6 148.5,429.9 154.5,433.8 160.5,436.7 166.5,439.6 172.5,443.5 178.5,447.4 184.5,452.0 190.5,458.7 196.5,462.7 202.5,468.0 208.5,471.2 214.5,471.0 220.5,468.4 226.5,466.2 232.5,465.4 238.5,465.3 244.5,472.0 250.5,479.1 256.5,490.6 262.5,499.4 268.5,498.4 274.5,498.4 280.5,498.3 286.5,494.6 292.5,491.3 298.5,489.7 304.5,489.5 310.5,486.8 316.5,483.5 322.5,483.0 328.5,480.8 334.5,480.8 340.5,481.4 346.5,481.9 352.5,484.2 358.5,481.1 364.5,483.2 370.5,483.8 376.5,484.6 382.5,483.5 388.5,482.6 394.5,480.8 400.5,482.3 406.5,482.7 412.5,483.5 418.5,481.3 424.5,477.8 430.5,477.5 436.5,478.0 442.5,476.9 448.5,476.3 454.5,474.7 460.5,469.0 466.5,467.1 472.5,466.8 478.5,468.8 484.5,468.0 490.5,467.2 496.5,469.9 502.5,475.4 508.5,478.2 514.5,479.6 520.5,480.5 526.5,481.5 532.5,482.9 538.5,483.3 544.5,484.7 550.5,488.0 556.5,491.6 562.5,497.1 568.5,499.2 574.5,502.7 580.5,504.1 586.5,502.9 592.5,500.1 598.5,499.3 604.5,499.0 610.5,500.3 616.5,500.9 622.5,500.8 628.5,500.2 634.5,498.9 640.5,497.5 646.5,498.2 652.5,500.3 658.5,503.0 664.5,505.6 670.5,509.1 676.5,511.2 682.5,510.2 688.5,508.5 694.5,507.2 700.5,504.9 706.5,502.6 712.5,498.8 718.5,496.2 724.5,495.3 730.5,494.9 736.5,496.3 742.5,497.8 748.5,499.4 754.5,500.3 760.5,498.9 766.5,496.5 772.5,494.4 778.5,492.7 784.5,490.1" fill="none" stroke="#ffffff" stroke-width="1" stroke-linejoin="round" shape-rendering="crispEdges"/>
<clipPath id="rsiclip"><rect x="0" y="531" width="815" height="129"/></clipPath>
<polyline points="4.5,589.0 10.5,601.8 16.5,595.6 22.5,591.6 28.5,602.0 34.5,598.5 40.5,597.6 46.5,587.4 52.5,575.4 58.5,583.4 64.5,581.8 70.5,599.4 76.5,598.4 82.5,597.0 88.5,593.4 94.5,583.5 100.5,578.7 106.5,571.7 112.5,566.4 118.5,563.9 124.5,556.1 130.5,554.5 136.5,555.5 142.5,568.3 148.5,565.8 154.5,587.8 160.5,584.6 166.5,585.5 172.5,593.0 178.5,595.8 184.5,604.1 190.5,622.1 196.5,612.0 202.5,623.3 208.5,616.3 214.5,599.7 220.5,587.2 226.5,585.6 232.5,591.0 238.5,592.9 244.5,631.4 250.5,638.9 256.5,659.5 262.5,658.0 268.5,619.1 274.5,622.4 280.5,622.4 286.5,607.8 292.5,606.3 298.5,611.1 304.5,616.4 310.5,604.8 316.5,600.1 322.5,610.4 328.5,602.2 334.5,610.6 340.5,613.8 346.5,613.1 352.5,623.1 358.5,599.1 364.5,620.4 370.5,615.4 376.5,617.1 382.5,608.5 388.5,607.9 394.5,602.6 400.5,618.0 406.5,613.6 412.5,616.3 418.5,601.3 424.5,593.1 430.5,606.8 436.5,610.2 442.5,602.3 448.5,603.1 454.5,596.3 460.5,577.4 466.5,592.3 472.5,598.2 478.5,609.4 484.5,597.6 490.5,596.0 496.5,613.4 502.5,628.4 508.5,620.2 514.5,615.3 520.5,614.1 526.5,614.8 532.5,618.4 538.5,613.9 544.5,620.0 550.5,632.7 556.5,637.8 562.5,651.1 568.5,635.5 574.5,645.0 580.5,636.7 586.5,622.9 592.5,613.9 598.5,622.0 604.5,624.7 610.5,633.7 616.5,631.2 622.5,628.6 628.5,625.9 634.5,620.4 640.5,618.6 646.5,632.1 652.5,641.6 658.5,648.3 664.5,652.2 670.5,660.1 676.5,656.4 682.5,634.2 688.5,629.3 694.5,630.9 700.5,621.6 706.5,619.5 712.5,605.1 718.5,609.4 724.5,619.6 730.5,622.6 736.5,636.4 742.5,639.8 748.5,643.2 754.5,641.8 760.5,620.6 766.5,611.0 772.5,609.9 778.5,609.9 784.5,598.9" fill="none" stroke="#f030f0" stroke-width="1" stroke-linejoin="round" clip-path="url(#rsiclip)" shape-rendering="crispEdges"/>
<text x="2" y="17.8" fill="#f4f4f4" font-size="12" font-weight="normal" textLength="47.7" lengthAdjust="spacingAndGlyphs" stroke="#f4f4f4" stroke-width="0.3">欧元美元</text>
<text x="51.2" y="17.8" fill="#f0a830" font-size="12" font-weight="normal" textLength="44.6" lengthAdjust="spacingAndGlyphs" stroke="#f0a830" stroke-width="0.3">【日线】</text>
<circle cx="103.2" cy="15.2" r="4.6" fill="none" stroke="#e8a030" stroke-width="0.9"/><path d="M98.6 15.2h9.2M103.2 10.6v9.2" stroke="#e8a030" stroke-width="0.9"/>
<rect x="115.5" y="5.5" width="12" height="12.5" fill="#ffffff"/>
<path d="M115.5 5.5h12M115.5 5.5v12.5" stroke="#1818a8" stroke-width="1.2" fill="none"/>
<rect x="115.5" y="16.6" width="12" height="1.6" fill="#1818a8"/>
<path d="M127.8 6v12.4H116" stroke="#8a8a8a" stroke-width="0.8" fill="none"/>
<path d="M116.2 12.6 L119.5 8.5 L122.4 11.6 L126.5 9.3" fill="none" stroke="#ff1010" stroke-width="1.1"/>
<path d="M116.2 15.5 L119.5 11.6 L122.4 14.4 L126.5 12.1" fill="none" stroke="#1030ff" stroke-width="1.1"/>
<text x="130.5" y="17.6" fill="#e8e8e8" font-size="12.5" font-weight="normal" textLength="116" lengthAdjust="spacingAndGlyphs" >MA1(5,10,20,30,100)</text>
<text x="251.8" y="17.6" fill="#e8e8e8" font-size="12.5" font-weight="normal" textLength="67" lengthAdjust="spacingAndGlyphs" >MA5:1.1596</text>
<text x="327.7" y="17.6" fill="#e0d820" font-size="12.5" font-weight="normal" textLength="73.5" lengthAdjust="spacingAndGlyphs" >MA10:1.1566</text>
<text x="410.6" y="17.6" fill="#e040e0" font-size="12.5" font-weight="normal" textLength="74.3" lengthAdjust="spacingAndGlyphs" >MA20:1.1566</text>
<text x="493.9" y="17.6" fill="#20c020" font-size="12.5" font-weight="normal" textLength="74.3" lengthAdjust="spacingAndGlyphs" >MA30:1.1576</text>
<text x="576.8" y="17.6" fill="#909090" font-size="12.5" font-weight="normal" textLength="81.4" lengthAdjust="spacingAndGlyphs" >MA100:1.1642</text>
<rect x="751.5" y="5.5" width="13" height="13" fill="none" stroke="#b0b0b0" stroke-width="1"/>
<rect x="767.5" y="5.5" width="13" height="13" fill="none" stroke="#b0b0b0" stroke-width="1"/>
<rect x="783.5" y="5.5" width="13" height="13" fill="none" stroke="#b0b0b0" stroke-width="1"/>
<rect x="799.5" y="5.5" width="13" height="13" fill="none" stroke="#b0b0b0" stroke-width="1"/>
<path d="M753 11.5h3M759.5 11.5h3.5M757.5 7v3M757.5 13.5v3M757 11.5h1" stroke="#c4c4c4" stroke-width="1.6"/>
<path d="M770.5 7.5v9M769.1 15.5h9.6M773.5 8.5v5.5" stroke="#c4c4c4" stroke-width="1" fill="none"/>
<path d="M768.8 9.2l1.7-2 1.7 2zM768.8 14.3l1.7 2 1.7-2zM777.3 13.8l2 1.7-2 1.7zM777.5 8.5v5.5l-3.3-2.75z" fill="#c4c4c4"/>
<path d="M786.5 7.5v9M785.1 15.5h9.6" stroke="#c4c4c4" stroke-width="1" fill="none"/>
<path d="M784.8 9.2l1.7-2 1.7 2zM784.8 14.3l1.7 2 1.7-2zM793.3 13.8l2 1.7-2 1.7zM788.7 8.5v6.2l5.1-3.1z" fill="#c4c4c4"/>
<path d="M802 7.5h2.4v9.2h-2.4zM804.4 11.3h4.5" stroke="#c4c4c4" stroke-width="1" fill="none"/>
<path d="M807.5 9.3l2.6 2-2.6 2z" fill="#c4c4c4"/>
<text x="3" y="420" fill="#e8e8e8" font-size="12.5" font-weight="normal" textLength="84" lengthAdjust="spacingAndGlyphs" >MACD(26,12,9)</text>
<text x="92.7" y="420" fill="#e8e8e8" font-size="12.5" font-weight="normal" textLength="69.7" lengthAdjust="spacingAndGlyphs" >DIFF:-0.0004</text>
<text x="172" y="420" fill="#d8d020" font-size="12.5" font-weight="normal" textLength="68.6" lengthAdjust="spacingAndGlyphs" >DEA:-0.0014</text>
<text x="249.2" y="420" fill="#e020e0" font-size="12.5" font-weight="normal" textLength="77.5" lengthAdjust="spacingAndGlyphs" >MACD:0.0020</text>
<text x="3" y="545" fill="#e8e8e8" font-size="12.5" font-weight="normal" textLength="73.6" lengthAdjust="spacingAndGlyphs" >RSI(14,14,14)</text>
<text x="81.6" y="545" fill="#e8e8e8" font-size="12.5" font-weight="normal" textLength="72.9" lengthAdjust="spacingAndGlyphs" >RSI1:56.9513</text>
<text x="164" y="545" fill="#d8d020" font-size="12.5" font-weight="normal" textLength="72" lengthAdjust="spacingAndGlyphs" >RSI2:56.9513</text>
<text x="245.6" y="545" fill="#e020e0" font-size="12.5" font-weight="normal" textLength="73.4" lengthAdjust="spacingAndGlyphs" >RSI3:56.9513</text>
<rect x="4" y="661" width="1" height="5" fill="#3a3a3a"/>
<text x="6" y="672.6" fill="#c8c8c8" font-size="12" font-weight="bold" textLength="44.6" lengthAdjust="spacingAndGlyphs" >2025/06</text>
<rect x="130" y="661" width="1" height="5" fill="#3a3a3a"/>
<text x="132" y="672.6" fill="#c8c8c8" font-size="12" font-weight="bold" textLength="44.6" lengthAdjust="spacingAndGlyphs" >2025/07</text>
<rect x="268" y="661" width="1" height="5" fill="#3a3a3a"/>
<text x="270" y="672.6" fill="#c8c8c8" font-size="12" font-weight="bold" textLength="44.6" lengthAdjust="spacingAndGlyphs" >2025/08</text>
<rect x="394" y="661" width="1" height="5" fill="#3a3a3a"/>
<text x="396" y="672.6" fill="#c8c8c8" font-size="12" font-weight="bold" textLength="44.6" lengthAdjust="spacingAndGlyphs" >2025/09</text>
<rect x="526" y="661" width="1" height="5" fill="#3a3a3a"/>
<text x="528" y="672.6" fill="#c8c8c8" font-size="12" font-weight="bold" textLength="44.6" lengthAdjust="spacingAndGlyphs" >2025/10</text>
<rect x="624.5" y="660.5" width="110" height="20" fill="#080808" stroke="#3a3a3a" stroke-width="1"/>
<text x="627" y="674.3" fill="#f0a030" font-size="12" font-weight="normal" textLength="104.6" lengthAdjust="spacingAndGlyphs" >2025/10/24 星期五</text>
<rect x="419" y="677" width="392" height="1" fill="#262626"/>
<text x="739.4" y="653.8" fill="#e8eef8" font-size="31" letter-spacing="1.8" stroke="#140a00" stroke-width="2" paint-order="stroke">FX678</text>
</svg></body></html>
